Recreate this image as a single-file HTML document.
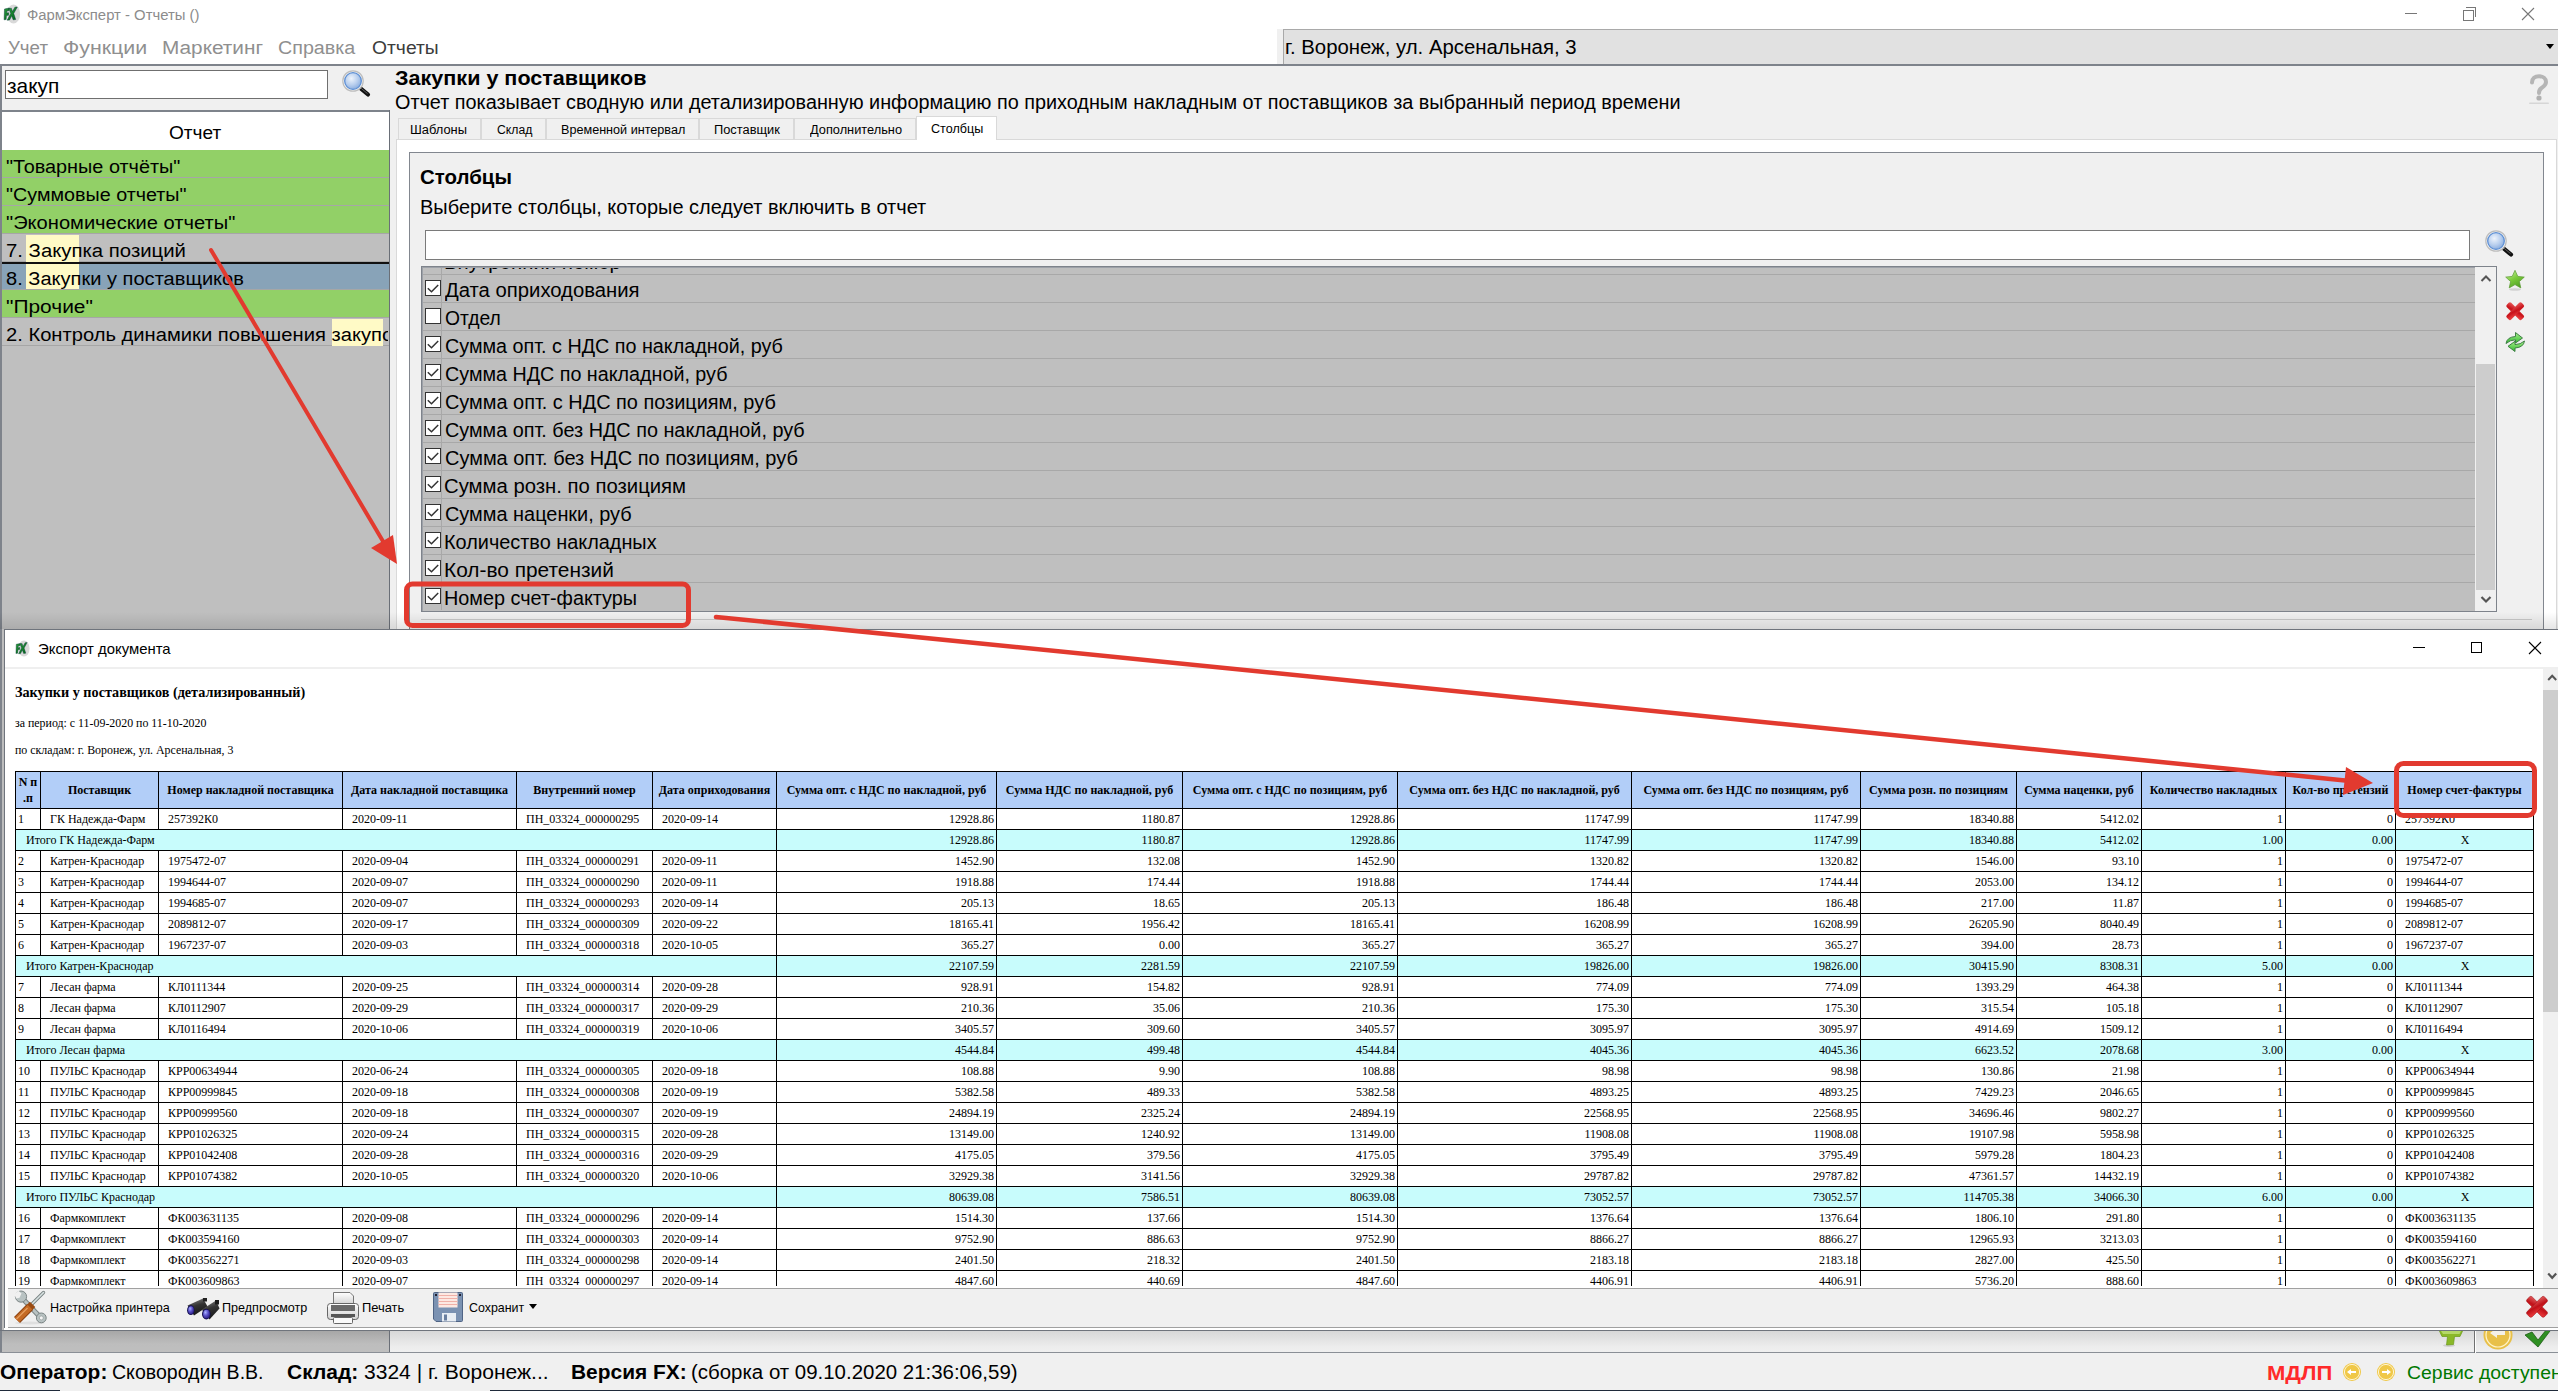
<!DOCTYPE html>
<html><head><meta charset="utf-8"><title>ФармЭксперт</title>
<style>html,body{margin:0;padding:0;width:2558px;height:1391px;overflow:hidden;position:relative;}</style>
</head><body>
<div style="position:absolute;left:0px;top:0px;width:2558px;height:1391px;background:#f0f0f0"></div><div style="position:absolute;left:0px;top:0px;width:2558px;height:29px;background:#fff"></div><div style="position:absolute;left:0px;top:29px;width:1277px;height:36px;background:#fff"></div><svg style="position:absolute;left:3px;top:3px" width="20" height="22" viewBox="0 0 20 22"><defs><linearGradient id="fxg1" x1="0" y1="0" x2="1" y2="1"><stop offset="0" stop-color="#2fa040"/><stop offset="1" stop-color="#006018"/></linearGradient></defs><ellipse cx="10.5" cy="11" rx="6.6" ry="9.4" fill="#d9d9d9"/><g transform="translate(1.5,0) scale(0.8,1) translate(-1.5,0)"><path d="M1.5 6L7.5 5L7.2 7.5L4.5 8L4.3 10L6.8 9.8L6.5 12.2L4 12.5L3.6 16.5L1 16.8Z" fill="url(#fxg1)" stroke="#033" stroke-width="0.5"/><path d="M7 5.5L10 5.2L11.5 8.5L14.5 4.2L17.5 4L13 10.5L15.5 16.5L12.3 16.8L10.5 12.8L7.8 17L4.8 17.2L9.3 10.5Z" fill="url(#fxg1)" stroke="#033" stroke-width="0.5"/></g></svg><div style="position:absolute;left:26.58px;top:7.56px;font:400 14.7px/14.7px 'Liberation Sans', sans-serif;color:#8c8c8c;white-space:nowrap;transform:scaleX(1.0118);transform-origin:0 0;">ФармЭксперт - Отчеты ()</div><div style="position:absolute;left:2405px;top:13px;width:12px;height:1px;background:#777"></div><div style="position:absolute;left:2463px;top:10px;width:9px;height:9px;border:1px solid #777"></div><div style="position:absolute;left:2466px;top:7px;width:9px;height:9px;border-top:1px solid #777;border-right:1px solid #777"></div><svg style="position:absolute;left:2521px;top:7px" width="14" height="14"><path d="M1 1L13 13M13 1L1 13" stroke="#777" stroke-width="1.1"/></svg><div style="position:absolute;left:8.04px;top:39.09px;font:400 18.8px/18.8px 'Liberation Sans', sans-serif;color:#8f8f8f;white-space:nowrap;transform:scaleX(0.9951);transform-origin:0 0;">Учет</div><div style="position:absolute;left:63.42px;top:39.09px;font:400 18.8px/18.8px 'Liberation Sans', sans-serif;color:#8f8f8f;white-space:nowrap;transform:scaleX(1.1377);transform-origin:0 0;">Функции</div><div style="position:absolute;left:162.24px;top:39.09px;font:400 18.8px/18.8px 'Liberation Sans', sans-serif;color:#8f8f8f;white-space:nowrap;transform:scaleX(1.1064);transform-origin:0 0;">Маркетинг</div><div style="position:absolute;left:278.41px;top:39.09px;font:400 18.8px/18.8px 'Liberation Sans', sans-serif;color:#8f8f8f;white-space:nowrap;transform:scaleX(1.0487);transform-origin:0 0;">Справка</div><div style="position:absolute;left:371.83px;top:39.09px;font:400 18.8px/18.8px 'Liberation Sans', sans-serif;color:#3c3c3c;white-space:nowrap;transform:scaleX(1.0273);transform-origin:0 0;">Отчеты</div><div style="position:absolute;left:1283px;top:29px;width:1275px;height:36px;background:#e1e1e1;border-top:1px solid #a9a9a9;border-left:1px solid #a9a9a9;box-sizing:border-box"></div><div style="position:absolute;left:1285.17px;top:38.15px;font:400 19.9px/19.9px 'Liberation Sans', sans-serif;color:#000;white-space:nowrap;transform:scaleX(1.0231);transform-origin:0 0;">г. Воронеж, ул. Арсенальная, 3</div><svg style="position:absolute;left:2546px;top:44px" width="9" height="6"><path d="M0 0H8L4 5Z" fill="#000"/></svg><div style="position:absolute;left:0px;top:64px;width:2558px;height:2px;background:#7e838b"></div><div style="position:absolute;left:0px;top:66px;width:2px;height:1287px;background:#7e838b"></div><div style="position:absolute;left:5px;top:70px;width:323px;height:29px;background:#fff;border:1px solid #6f6f6f;box-sizing:border-box"></div><div style="position:absolute;left:7.38px;top:76.00px;font:400 20.2px/20.2px 'Liberation Sans', sans-serif;color:#000;white-space:nowrap;transform:scaleX(1.0331);transform-origin:0 0;">закуп</div><svg style="position:absolute;left:341px;top:69px" width="32" height="32" viewBox="0 0 32 32"><defs><radialGradient id="sg" cx="40%" cy="35%" r="65%"><stop offset="0" stop-color="#eef4fc"/><stop offset="0.6" stop-color="#b9cfee"/><stop offset="1" stop-color="#8eb0e0"/></radialGradient></defs><line x1="18.5" y1="18.5" x2="27" y2="25.5" stroke="#111" stroke-width="4.2" stroke-linecap="round"/><line x1="19.5" y1="18.8" x2="26.5" y2="24.6" stroke="#666" stroke-width="0.9"/><circle cx="12" cy="12" r="10.2" fill="#f4f4f4" stroke="#bdbdbd" stroke-width="1.2"/><circle cx="12" cy="12" r="8.3" fill="url(#sg)" stroke="#5d8fd4" stroke-width="1.3"/></svg><div style="position:absolute;left:0px;top:110px;width:390px;height:2px;background:#7e838b"></div><div style="position:absolute;left:2px;top:112px;width:387px;height:38px;background:#fff"></div><div style="position:absolute;left:168.84px;top:123.77px;font:400 18.7px/18.7px 'Liberation Sans', sans-serif;color:#000;white-space:nowrap;transform:scaleX(1.0215);transform-origin:0 0;">Отчет</div><div style="position:absolute;left:2px;top:150px;width:387px;height:1203px;background:#bfbfbf"></div><div style="position:absolute;left:2px;top:150px;width:387px;height:28px;background:#92d067"></div><div style="position:absolute;left:2px;top:177px;width:387px;height:1px;background:#a6a6a6"></div><div style="position:absolute;left:2px;top:178px;width:387px;height:28px;background:#92d067"></div><div style="position:absolute;left:2px;top:205px;width:387px;height:1px;background:#a6a6a6"></div><div style="position:absolute;left:2px;top:206px;width:387px;height:28px;background:#92d067"></div><div style="position:absolute;left:2px;top:233px;width:387px;height:1px;background:#a6a6a6"></div><div style="position:absolute;left:2px;top:234px;width:387px;height:28px;background:#bfbfbf"></div><div style="position:absolute;left:2px;top:261px;width:387px;height:1px;background:#a6a6a6"></div><div style="position:absolute;left:2px;top:262px;width:387px;height:28px;background:#88a3b8"></div><div style="position:absolute;left:2px;top:289px;width:387px;height:1px;background:#a6a6a6"></div><div style="position:absolute;left:2px;top:290px;width:387px;height:28px;background:#92d067"></div><div style="position:absolute;left:2px;top:317px;width:387px;height:1px;background:#a6a6a6"></div><div style="position:absolute;left:2px;top:318px;width:387px;height:28px;background:#bfbfbf"></div><div style="position:absolute;left:2px;top:345px;width:387px;height:1px;background:#a6a6a6"></div><div style="position:absolute;left:26px;top:235px;width:53px;height:27px;background:#fffac6"></div><div style="position:absolute;left:26px;top:263px;width:53px;height:26px;background:#fffac6"></div><div style="position:absolute;left:332px;top:319px;width:51px;height:27px;background:#fffac6"></div><div style="position:absolute;left:2px;top:262px;width:387px;height:2px;background:#111"></div><div style="position:absolute;left:2px;top:150px;width:386px;height:28px;overflow:hidden"><div style="position:absolute;left:4.11px;top:6.65px;font:400 19.2px/19.2px 'Liberation Sans', sans-serif;color:#000;white-space:nowrap;transform:scaleX(1.0351);transform-origin:0 0;">&quot;Товарные отчёты&quot;</div></div><div style="position:absolute;left:2px;top:178px;width:386px;height:28px;overflow:hidden"><div style="position:absolute;left:4.11px;top:6.65px;font:400 19.2px/19.2px 'Liberation Sans', sans-serif;color:#000;white-space:nowrap;transform:scaleX(1.0285);transform-origin:0 0;">&quot;Суммовые отчеты&quot;</div></div><div style="position:absolute;left:2px;top:206px;width:386px;height:28px;overflow:hidden"><div style="position:absolute;left:4.10px;top:6.65px;font:400 19.2px/19.2px 'Liberation Sans', sans-serif;color:#000;white-space:nowrap;transform:scaleX(1.0476);transform-origin:0 0;">&quot;Экономические отчеты&quot;</div></div><div style="position:absolute;left:2px;top:234px;width:386px;height:28px;overflow:hidden"><div style="position:absolute;left:3.88px;top:6.65px;font:400 19.2px/19.2px 'Liberation Sans', sans-serif;color:#000;white-space:nowrap;transform:scaleX(1.0596);transform-origin:0 0;">7. Закупка позиций</div></div><div style="position:absolute;left:2px;top:262px;width:386px;height:28px;overflow:hidden"><div style="position:absolute;left:4.00px;top:6.65px;font:400 19.2px/19.2px 'Liberation Sans', sans-serif;color:#000;white-space:nowrap;transform:scaleX(1.0452);transform-origin:0 0;">8. Закупки у поставщиков</div></div><div style="position:absolute;left:2px;top:290px;width:386px;height:28px;overflow:hidden"><div style="position:absolute;left:4.06px;top:6.65px;font:400 19.2px/19.2px 'Liberation Sans', sans-serif;color:#000;white-space:nowrap;transform:scaleX(1.0902);transform-origin:0 0;">&quot;Прочие&quot;</div></div><div style="position:absolute;left:2px;top:318px;width:386px;height:28px;overflow:hidden"><div style="position:absolute;left:3.89px;top:6.65px;font:400 19.2px/19.2px 'Liberation Sans', sans-serif;color:#000;white-space:nowrap;transform:scaleX(1.0508);transform-origin:0 0">2. Контроль динамики повышения закупок</div></div><div style="position:absolute;left:389px;top:110px;width:1px;height:1243px;background:#6a6f77"></div><div style="position:absolute;left:395.26px;top:68.45px;font:700 20.5px/20.5px 'Liberation Sans', sans-serif;color:#000;white-space:nowrap;transform:scaleX(1.0522);transform-origin:0 0;">Закупки у поставщиков</div><div style="position:absolute;left:395.31px;top:92.99px;font:400 19.5px/19.5px 'Liberation Sans', sans-serif;color:#000;white-space:nowrap;transform:scaleX(1.0166);transform-origin:0 0;">Отчет показывает сводную или детализированную информацию по приходным накладным от поставщиков за выбранный период времени</div><svg style="position:absolute;left:2527px;top:74px" width="24" height="32" viewBox="0 0 24 32"><path d="M5 8.5C5 4.5 8 2.2 12 2.2C16 2.2 19 4.6 19 8C19 11.2 16.5 12.6 14.5 14C12.8 15.2 12 16.3 12 19" fill="none" stroke="#b5b5b5" stroke-width="4" stroke-linecap="round"/><circle cx="12" cy="24" r="2.6" fill="#b0b0b0"/><rect x="2" y="28.5" width="20" height="1.6" rx="0.8" fill="#d6d6d6"/></svg><div style="position:absolute;left:398px;top:118px;width:83px;height:22px;background:#f0f0f0;border:1px solid #d9d9d9;border-bottom:none;box-sizing:border-box"></div><div style="position:absolute;left:410.47px;top:123.92px;font:400 12.5px/12.5px 'Liberation Sans', sans-serif;color:#000;white-space:nowrap;transform:scaleX(1.0292);transform-origin:0 0;">Шаблоны</div><div style="position:absolute;left:481px;top:118px;width:65px;height:22px;background:#f0f0f0;border:1px solid #d9d9d9;border-bottom:none;box-sizing:border-box"></div><div style="position:absolute;left:496.89px;top:123.92px;font:400 12.5px/12.5px 'Liberation Sans', sans-serif;color:#000;white-space:nowrap;transform:scaleX(0.9770);transform-origin:0 0;">Склад</div><div style="position:absolute;left:546px;top:118px;width:153px;height:22px;background:#f0f0f0;border:1px solid #d9d9d9;border-bottom:none;box-sizing:border-box"></div><div style="position:absolute;left:561.29px;top:123.92px;font:400 12.5px/12.5px 'Liberation Sans', sans-serif;color:#000;white-space:nowrap;transform:scaleX(1.0095);transform-origin:0 0;">Временной интервал</div><div style="position:absolute;left:699px;top:118px;width:95px;height:22px;background:#f0f0f0;border:1px solid #d9d9d9;border-bottom:none;box-sizing:border-box"></div><div style="position:absolute;left:714.17px;top:123.92px;font:400 12.5px/12.5px 'Liberation Sans', sans-serif;color:#000;white-space:nowrap;transform:scaleX(1.0265);transform-origin:0 0;">Поставщик</div><div style="position:absolute;left:794px;top:118px;width:122px;height:22px;background:#f0f0f0;border:1px solid #d9d9d9;border-bottom:none;box-sizing:border-box"></div><div style="position:absolute;left:810.14px;top:123.92px;font:400 12.5px/12.5px 'Liberation Sans', sans-serif;color:#000;white-space:nowrap;transform:scaleX(1.0227);transform-origin:0 0;">Дополнительно</div><div style="position:absolute;left:396px;top:139px;width:2161px;height:1214px;background:#fff;border:1px solid #d9d9d9;box-sizing:border-box"></div><div style="position:absolute;left:916px;top:116px;width:81px;height:24px;background:#fff;border:1px solid #d9d9d9;border-bottom:none;box-sizing:border-box"></div><div style="position:absolute;left:931.47px;top:123.42px;font:400 12.5px/12.5px 'Liberation Sans', sans-serif;color:#000;white-space:nowrap;transform:scaleX(1.0065);transform-origin:0 0;">Столбцы</div><div style="position:absolute;left:409px;top:152px;width:2135px;height:1201px;background:#f0f0f0;border:1px solid #82878f;box-sizing:border-box"></div><div style="position:absolute;left:420.38px;top:168.49px;font:700 19.5px/19.5px 'Liberation Sans', sans-serif;color:#000;white-space:nowrap;transform:scaleX(1.0490);transform-origin:0 0;">Столбцы</div><div style="position:absolute;left:419.90px;top:198.49px;font:400 19.5px/19.5px 'Liberation Sans', sans-serif;color:#000;white-space:nowrap;transform:scaleX(1.0238);transform-origin:0 0;">Выберите столбцы, которые следует включить в отчет</div><div style="position:absolute;left:425px;top:230px;width:2045px;height:30px;background:#fff;border:1px solid #7a7a7a;box-sizing:border-box"></div><svg style="position:absolute;left:2484px;top:229px" width="32" height="32" viewBox="0 0 32 32"><defs><radialGradient id="sg2" cx="40%" cy="35%" r="65%"><stop offset="0" stop-color="#eef4fc"/><stop offset="0.6" stop-color="#b9cfee"/><stop offset="1" stop-color="#8eb0e0"/></radialGradient></defs><line x1="18.5" y1="18.5" x2="27" y2="25.5" stroke="#111" stroke-width="4.2" stroke-linecap="round"/><line x1="19.5" y1="18.8" x2="26.5" y2="24.6" stroke="#666" stroke-width="0.9"/><circle cx="12" cy="12" r="10.2" fill="#f4f4f4" stroke="#bdbdbd" stroke-width="1.2"/><circle cx="12" cy="12" r="8.3" fill="url(#sg2)" stroke="#5d8fd4" stroke-width="1.3"/></svg><div style="position:absolute;left:421px;top:266px;width:2076px;height:346px;background:#bfbfbf;border:1px solid #7e838b;box-sizing:border-box"></div><div style="position:absolute;left:422px;top:267px;width:2053px;height:1px;background:#9da1a8"></div><div style="position:absolute;left:422px;top:267px;width:1px;height:344px;background:#9da1a8"></div><div style="position:absolute;left:423px;top:268px;width:2052px;height:342px;overflow:hidden"><div style="position:absolute;left:0px;top:6px;width:2052px;height:1px;background:#a8a8a8"></div><div style="position:absolute;left:18px;top:-22px;width:1px;height:28px;background:#a8a8a8"></div><div style="position:absolute;left:2px;top:-16px;width:16px;height:16px;background:#fff;border:1px solid #333;box-sizing:border-box"></div><svg style="position:absolute;left:2px;top:-16px" width="16" height="16"><path d="M2.8 8.3L6.5 11.8L13.2 5" fill="none" stroke="#333" stroke-width="1.5"/></svg><div style="position:absolute;left:20.87px;top:-15.42px;font:400 19.4px/19.4px 'Liberation Sans', sans-serif;color:#000;white-space:nowrap;transform:scaleX(1.0490);transform-origin:0 0;">Внутренний номер</div><div style="position:absolute;left:0px;top:34px;width:2052px;height:1px;background:#a8a8a8"></div><div style="position:absolute;left:18px;top:6px;width:1px;height:28px;background:#a8a8a8"></div><div style="position:absolute;left:2px;top:12px;width:16px;height:16px;background:#fff;border:1px solid #333;box-sizing:border-box"></div><svg style="position:absolute;left:2px;top:12px" width="16" height="16"><path d="M2.8 8.3L6.5 11.8L13.2 5" fill="none" stroke="#333" stroke-width="1.5"/></svg><div style="position:absolute;left:22.40px;top:12.58px;font:400 19.4px/19.4px 'Liberation Sans', sans-serif;color:#000;white-space:nowrap;transform:scaleX(1.0455);transform-origin:0 0;">Дата оприходования</div><div style="position:absolute;left:0px;top:62px;width:2052px;height:1px;background:#a8a8a8"></div><div style="position:absolute;left:18px;top:34px;width:1px;height:28px;background:#a8a8a8"></div><div style="position:absolute;left:2px;top:40px;width:16px;height:16px;background:#fff;border:1px solid #333;box-sizing:border-box"></div><div style="position:absolute;left:21.63px;top:40.58px;font:400 19.4px/19.4px 'Liberation Sans', sans-serif;color:#000;white-space:nowrap;transform:scaleX(0.9938);transform-origin:0 0;">Отдел</div><div style="position:absolute;left:0px;top:90px;width:2052px;height:1px;background:#a8a8a8"></div><div style="position:absolute;left:18px;top:62px;width:1px;height:28px;background:#a8a8a8"></div><div style="position:absolute;left:2px;top:68px;width:16px;height:16px;background:#fff;border:1px solid #333;box-sizing:border-box"></div><svg style="position:absolute;left:2px;top:68px" width="16" height="16"><path d="M2.8 8.3L6.5 11.8L13.2 5" fill="none" stroke="#333" stroke-width="1.5"/></svg><div style="position:absolute;left:21.51px;top:68.58px;font:400 19.4px/19.4px 'Liberation Sans', sans-serif;color:#000;white-space:nowrap;transform:scaleX(1.0185);transform-origin:0 0;">Сумма опт. с НДС по накладной, руб</div><div style="position:absolute;left:0px;top:118px;width:2052px;height:1px;background:#a8a8a8"></div><div style="position:absolute;left:18px;top:90px;width:1px;height:28px;background:#a8a8a8"></div><div style="position:absolute;left:2px;top:96px;width:16px;height:16px;background:#fff;border:1px solid #333;box-sizing:border-box"></div><svg style="position:absolute;left:2px;top:96px" width="16" height="16"><path d="M2.8 8.3L6.5 11.8L13.2 5" fill="none" stroke="#333" stroke-width="1.5"/></svg><div style="position:absolute;left:21.51px;top:96.58px;font:400 19.4px/19.4px 'Liberation Sans', sans-serif;color:#000;white-space:nowrap;transform:scaleX(1.0168);transform-origin:0 0;">Сумма НДС по накладной, руб</div><div style="position:absolute;left:0px;top:146px;width:2052px;height:1px;background:#a8a8a8"></div><div style="position:absolute;left:18px;top:118px;width:1px;height:28px;background:#a8a8a8"></div><div style="position:absolute;left:2px;top:124px;width:16px;height:16px;background:#fff;border:1px solid #333;box-sizing:border-box"></div><svg style="position:absolute;left:2px;top:124px" width="16" height="16"><path d="M2.8 8.3L6.5 11.8L13.2 5" fill="none" stroke="#333" stroke-width="1.5"/></svg><div style="position:absolute;left:21.50px;top:124.58px;font:400 19.4px/19.4px 'Liberation Sans', sans-serif;color:#000;white-space:nowrap;transform:scaleX(1.0263);transform-origin:0 0;">Сумма опт. с НДС по позициям, руб</div><div style="position:absolute;left:0px;top:174px;width:2052px;height:1px;background:#a8a8a8"></div><div style="position:absolute;left:18px;top:146px;width:1px;height:28px;background:#a8a8a8"></div><div style="position:absolute;left:2px;top:152px;width:16px;height:16px;background:#fff;border:1px solid #333;box-sizing:border-box"></div><svg style="position:absolute;left:2px;top:152px" width="16" height="16"><path d="M2.8 8.3L6.5 11.8L13.2 5" fill="none" stroke="#333" stroke-width="1.5"/></svg><div style="position:absolute;left:21.51px;top:152.58px;font:400 19.4px/19.4px 'Liberation Sans', sans-serif;color:#000;white-space:nowrap;transform:scaleX(1.0215);transform-origin:0 0;">Сумма опт. без НДС по накладной, руб</div><div style="position:absolute;left:0px;top:202px;width:2052px;height:1px;background:#a8a8a8"></div><div style="position:absolute;left:18px;top:174px;width:1px;height:28px;background:#a8a8a8"></div><div style="position:absolute;left:2px;top:180px;width:16px;height:16px;background:#fff;border:1px solid #333;box-sizing:border-box"></div><svg style="position:absolute;left:2px;top:180px" width="16" height="16"><path d="M2.8 8.3L6.5 11.8L13.2 5" fill="none" stroke="#333" stroke-width="1.5"/></svg><div style="position:absolute;left:21.50px;top:180.58px;font:400 19.4px/19.4px 'Liberation Sans', sans-serif;color:#000;white-space:nowrap;transform:scaleX(1.0295);transform-origin:0 0;">Сумма опт. без НДС по позициям, руб</div><div style="position:absolute;left:0px;top:230px;width:2052px;height:1px;background:#a8a8a8"></div><div style="position:absolute;left:18px;top:202px;width:1px;height:28px;background:#a8a8a8"></div><div style="position:absolute;left:2px;top:208px;width:16px;height:16px;background:#fff;border:1px solid #333;box-sizing:border-box"></div><svg style="position:absolute;left:2px;top:208px" width="16" height="16"><path d="M2.8 8.3L6.5 11.8L13.2 5" fill="none" stroke="#333" stroke-width="1.5"/></svg><div style="position:absolute;left:21.48px;top:208.58px;font:400 19.4px/19.4px 'Liberation Sans', sans-serif;color:#000;white-space:nowrap;transform:scaleX(1.0466);transform-origin:0 0;">Сумма розн. по позициям</div><div style="position:absolute;left:0px;top:258px;width:2052px;height:1px;background:#a8a8a8"></div><div style="position:absolute;left:18px;top:230px;width:1px;height:28px;background:#a8a8a8"></div><div style="position:absolute;left:2px;top:236px;width:16px;height:16px;background:#fff;border:1px solid #333;box-sizing:border-box"></div><svg style="position:absolute;left:2px;top:236px" width="16" height="16"><path d="M2.8 8.3L6.5 11.8L13.2 5" fill="none" stroke="#333" stroke-width="1.5"/></svg><div style="position:absolute;left:21.50px;top:236.58px;font:400 19.4px/19.4px 'Liberation Sans', sans-serif;color:#000;white-space:nowrap;transform:scaleX(1.0265);transform-origin:0 0;">Сумма наценки, руб</div><div style="position:absolute;left:0px;top:286px;width:2052px;height:1px;background:#a8a8a8"></div><div style="position:absolute;left:18px;top:258px;width:1px;height:28px;background:#a8a8a8"></div><div style="position:absolute;left:2px;top:264px;width:16px;height:16px;background:#fff;border:1px solid #333;box-sizing:border-box"></div><svg style="position:absolute;left:2px;top:264px" width="16" height="16"><path d="M2.8 8.3L6.5 11.8L13.2 5" fill="none" stroke="#333" stroke-width="1.5"/></svg><div style="position:absolute;left:20.91px;top:264.58px;font:400 19.4px/19.4px 'Liberation Sans', sans-serif;color:#000;white-space:nowrap;transform:scaleX(1.0246);transform-origin:0 0;">Количество накладных</div><div style="position:absolute;left:0px;top:314px;width:2052px;height:1px;background:#a8a8a8"></div><div style="position:absolute;left:18px;top:286px;width:1px;height:28px;background:#a8a8a8"></div><div style="position:absolute;left:2px;top:292px;width:16px;height:16px;background:#fff;border:1px solid #333;box-sizing:border-box"></div><svg style="position:absolute;left:2px;top:292px" width="16" height="16"><path d="M2.8 8.3L6.5 11.8L13.2 5" fill="none" stroke="#333" stroke-width="1.5"/></svg><div style="position:absolute;left:20.83px;top:292.58px;font:400 19.4px/19.4px 'Liberation Sans', sans-serif;color:#000;white-space:nowrap;transform:scaleX(1.0761);transform-origin:0 0;">Кол-во претензий</div><div style="position:absolute;left:0px;top:342px;width:2052px;height:1px;background:#a8a8a8"></div><div style="position:absolute;left:18px;top:314px;width:1px;height:28px;background:#a8a8a8"></div><div style="position:absolute;left:2px;top:320px;width:16px;height:16px;background:#fff;border:1px solid #333;box-sizing:border-box"></div><svg style="position:absolute;left:2px;top:320px" width="16" height="16"><path d="M2.8 8.3L6.5 11.8L13.2 5" fill="none" stroke="#333" stroke-width="1.5"/></svg><div style="position:absolute;left:20.91px;top:320.58px;font:400 19.4px/19.4px 'Liberation Sans', sans-serif;color:#000;white-space:nowrap;transform:scaleX(1.0223);transform-origin:0 0;">Номер счет-фактуры</div></div><div style="position:absolute;left:2475px;top:267px;width:21px;height:344px;background:#f0f0f0"></div><div style="position:absolute;left:2476px;top:364px;width:19px;height:226px;background:#cdcdcd"></div><svg style="position:absolute;left:2480px;top:273px" width="12" height="10"><path d="M1.5 8L6 3.5L10.5 8" fill="none" stroke="#555" stroke-width="2"/></svg><svg style="position:absolute;left:2480px;top:595px" width="12" height="10"><path d="M1.5 2L6 6.5L10.5 2" fill="none" stroke="#555" stroke-width="2.2"/></svg><div style="position:absolute;left:421px;top:619px;width:2111px;height:1px;background:#c8c8c8"></div><svg style="position:absolute;left:2503px;top:268px" width="24" height="24" viewBox="0 0 24 24"><defs><linearGradient id="stg" x1="0.2" y1="0" x2="0.8" y2="1"><stop offset="0" stop-color="#c8f0a0"/><stop offset="0.45" stop-color="#7ccc3c"/><stop offset="1" stop-color="#4a9a20"/></linearGradient></defs><ellipse cx="12" cy="21.5" rx="6" ry="1.3" fill="rgba(0,0,0,0.12)"/><path d="M12 2.3L14.8 8.4L21.3 9.1L16.4 13.5L17.8 19.9L12 16.6L6.2 19.9L7.6 13.5L2.7 9.1L9.2 8.4Z" fill="url(#stg)" stroke="#5a9a30" stroke-width="0.7" stroke-linejoin="round"/></svg><svg style="position:absolute;left:2504px;top:300px" width="22" height="22" viewBox="0 0 22 22"><defs><linearGradient id="xg" x1="0" y1="0" x2="1" y2="1"><stop offset="0" stop-color="#e85a5a"/><stop offset="0.5" stop-color="#c8121a"/><stop offset="1" stop-color="#f04848"/></linearGradient></defs><g transform="translate(11.2,11.2) rotate(45)" fill="url(#xg)"><rect x="-10.5" y="-3.1" width="21" height="6.2" rx="1.8"/><rect x="-3.1" y="-10.5" width="6.2" height="21" rx="1.8"/></g></svg><svg style="position:absolute;left:2504px;top:330px" width="22" height="24" viewBox="0 0 22 24"><defs><linearGradient id="rfg" x1="0" y1="0" x2="0" y2="1"><stop offset="0" stop-color="#a8f08a"/><stop offset="1" stop-color="#30b830"/></linearGradient></defs><path d="M2 13.5Q3 7 11.5 6.5L11.5 2.5L18.5 8L11.5 13L11.5 9.8Q6 10 2 13.5Z" fill="url(#rfg)" stroke="#3f7f45" stroke-width="1" stroke-linejoin="round"/><path d="M20.5 11Q19.5 17.5 11 18L11 21.5L4 16.3L11 11.3L11 14.6Q16.5 14.5 20.5 11Z" fill="url(#rfg)" stroke="#3f7f45" stroke-width="1" stroke-linejoin="round"/></svg><div style="position:absolute;left:0px;top:612px;width:2558px;height:17px;background:linear-gradient(180deg,rgba(0,0,0,0),rgba(0,0,0,0.10))"></div><div style="position:absolute;left:2px;top:629px;width:2px;height:701px;background:#bdbdbd"></div><div style="position:absolute;left:4px;top:629px;width:2554px;height:701px;background:#fff;border-top:1px solid #6f747c;border-left:1px solid #6f747c;box-sizing:border-box"></div><svg style="position:absolute;left:15px;top:638.5px" width="17" height="19" viewBox="0 0 20 22"><defs><linearGradient id="fxg2" x1="0" y1="0" x2="1" y2="1"><stop offset="0" stop-color="#2fa040"/><stop offset="1" stop-color="#006018"/></linearGradient></defs><ellipse cx="10.5" cy="11" rx="6.6" ry="9.4" fill="#d9d9d9"/><g transform="translate(1.5,0) scale(0.8,1) translate(-1.5,0)"><path d="M1.5 6L7.5 5L7.2 7.5L4.5 8L4.3 10L6.8 9.8L6.5 12.2L4 12.5L3.6 16.5L1 16.8Z" fill="url(#fxg2)" stroke="#033" stroke-width="0.5"/><path d="M7 5.5L10 5.2L11.5 8.5L14.5 4.2L17.5 4L13 10.5L15.5 16.5L12.3 16.8L10.5 12.8L7.8 17L4.8 17.2L9.3 10.5Z" fill="url(#fxg2)" stroke="#033" stroke-width="0.5"/></g></svg><div style="position:absolute;left:38.38px;top:641.73px;font:400 14.5px/14.5px 'Liberation Sans', sans-serif;color:#000;white-space:nowrap;transform:scaleX(1.0265);transform-origin:0 0;">Экспорт документа</div><div style="position:absolute;left:2413px;top:647px;width:12px;height:1px;background:#000"></div><div style="position:absolute;left:2471px;top:642px;width:11px;height:11px;border:1px solid #000;box-sizing:border-box"></div><svg style="position:absolute;left:2528px;top:641px" width="14" height="14"><path d="M1 1L13 13M13 1L1 13" stroke="#000" stroke-width="1.1"/></svg><div style="position:absolute;left:5px;top:667px;width:2553px;height:2px;background:#efefef"></div><div style="position:absolute;left:15px;top:684.71px;font:700 14.2px/14.2px 'Liberation Serif', serif;color:#000;white-space:nowrap;">Закупки у поставщиков (детализированный)</div><div style="position:absolute;left:15px;top:718.03px;font:400 11.9px/11.9px 'Liberation Serif', serif;color:#000;white-space:nowrap;">за период: с 11-09-2020 по 11-10-2020</div><div style="position:absolute;left:15px;top:745.03px;font:400 11.9px/11.9px 'Liberation Serif', serif;color:#000;white-space:nowrap;">по складам: г. Воронеж, ул. Арсенальная, 3</div><div style="position:absolute;left:2543px;top:669px;width:15px;height:619px;background:#f0f0f0"></div><div style="position:absolute;left:2543px;top:690px;width:15px;height:322px;background:#cdcdcd"></div><svg style="position:absolute;left:2547px;top:673px" width="11" height="9"><path d="M1.2 7L5.2 2.8L9.2 7" fill="none" stroke="#555" stroke-width="2"/></svg><svg style="position:absolute;left:2547px;top:1272px" width="11" height="9"><path d="M1.2 1.5L5.2 5.8L9.2 1.5" fill="none" stroke="#555" stroke-width="2.2"/></svg><div style="position:absolute;left:0;top:0;width:2543px;height:1286px;overflow:hidden"><div style="position:absolute;left:15px;top:771px;width:2519px;height:37px;background:#b2cef8"></div><div style="position:absolute;left:-900.5px;width:2000px;text-align:center;top:783.95px;font:700 12px/12px 'Liberation Serif', serif;color:#000;white-space:nowrap;">Поставщик</div><div style="position:absolute;left:-749.5px;width:2000px;text-align:center;top:783.95px;font:700 12px/12px 'Liberation Serif', serif;color:#000;white-space:nowrap;">Номер накладной поставщика</div><div style="position:absolute;left:-570.5px;width:2000px;text-align:center;top:783.95px;font:700 12px/12px 'Liberation Serif', serif;color:#000;white-space:nowrap;">Дата накладной поставщика</div><div style="position:absolute;left:-415.5px;width:2000px;text-align:center;top:783.95px;font:700 12px/12px 'Liberation Serif', serif;color:#000;white-space:nowrap;">Внутренний номер</div><div style="position:absolute;left:-285.5px;width:2000px;text-align:center;top:783.95px;font:700 12px/12px 'Liberation Serif', serif;color:#000;white-space:nowrap;">Дата оприходования</div><div style="position:absolute;left:-113.5px;width:2000px;text-align:center;top:783.95px;font:700 12px/12px 'Liberation Serif', serif;color:#000;white-space:nowrap;">Сумма опт. с НДС по накладной, руб</div><div style="position:absolute;left:89.5px;width:2000px;text-align:center;top:783.95px;font:700 12px/12px 'Liberation Serif', serif;color:#000;white-space:nowrap;">Сумма НДС по накладной, руб</div><div style="position:absolute;left:290.0px;width:2000px;text-align:center;top:783.95px;font:700 12px/12px 'Liberation Serif', serif;color:#000;white-space:nowrap;">Сумма опт. с НДС по позициям, руб</div><div style="position:absolute;left:514.5px;width:2000px;text-align:center;top:783.95px;font:700 12px/12px 'Liberation Serif', serif;color:#000;white-space:nowrap;">Сумма опт. без НДС по накладной, руб</div><div style="position:absolute;left:746.0px;width:2000px;text-align:center;top:783.95px;font:700 12px/12px 'Liberation Serif', serif;color:#000;white-space:nowrap;">Сумма опт. без НДС по позициям, руб</div><div style="position:absolute;left:938.5px;width:2000px;text-align:center;top:783.95px;font:700 12px/12px 'Liberation Serif', serif;color:#000;white-space:nowrap;">Сумма розн. по позициям</div><div style="position:absolute;left:1079.0px;width:2000px;text-align:center;top:783.95px;font:700 12px/12px 'Liberation Serif', serif;color:#000;white-space:nowrap;">Сумма наценки, руб</div><div style="position:absolute;left:1213.5px;width:2000px;text-align:center;top:783.95px;font:700 12px/12px 'Liberation Serif', serif;color:#000;white-space:nowrap;">Количество накладных</div><div style="position:absolute;left:1340.5px;width:2000px;text-align:center;top:783.95px;font:700 12px/12px 'Liberation Serif', serif;color:#000;white-space:nowrap;">Кол-во претензий</div><div style="position:absolute;left:1464.5px;width:2000px;text-align:center;top:783.95px;font:700 12px/12px 'Liberation Serif', serif;color:#000;white-space:nowrap;">Номер счет-фактуры</div><div style="position:absolute;left:-972px;width:2000px;text-align:center;top:775.95px;font:700 12px/12px 'Liberation Serif', serif;color:#000;white-space:nowrap;">N п</div><div style="position:absolute;left:-972px;width:2000px;text-align:center;top:791.95px;font:700 12px/12px 'Liberation Serif', serif;color:#000;white-space:nowrap;">.п</div><div style="position:absolute;left:18px;top:812.95px;font:400 12px/12px 'Liberation Serif', serif;color:#000;white-space:nowrap;">1</div><div style="position:absolute;left:50px;top:812.95px;font:400 12px/12px 'Liberation Serif', serif;color:#000;white-space:nowrap;">ГК Надежда-Фарм</div><div style="position:absolute;left:168px;top:812.95px;font:400 12px/12px 'Liberation Serif', serif;color:#000;white-space:nowrap;">257392К0</div><div style="position:absolute;left:352px;top:812.95px;font:400 12px/12px 'Liberation Serif', serif;color:#000;white-space:nowrap;">2020-09-11</div><div style="position:absolute;left:526px;top:812.95px;font:400 12px/12px 'Liberation Serif', serif;color:#000;white-space:nowrap;">ПН_03324_000000295</div><div style="position:absolute;left:662px;top:812.95px;font:400 12px/12px 'Liberation Serif', serif;color:#000;white-space:nowrap;">2020-09-14</div><div style="position:absolute;left:-1006px;width:2000px;text-align:right;top:812.95px;font:400 12px/12px 'Liberation Serif', serif;color:#000;white-space:nowrap;">12928.86</div><div style="position:absolute;left:-820px;width:2000px;text-align:right;top:812.95px;font:400 12px/12px 'Liberation Serif', serif;color:#000;white-space:nowrap;">1180.87</div><div style="position:absolute;left:-605px;width:2000px;text-align:right;top:812.95px;font:400 12px/12px 'Liberation Serif', serif;color:#000;white-space:nowrap;">12928.86</div><div style="position:absolute;left:-371px;width:2000px;text-align:right;top:812.95px;font:400 12px/12px 'Liberation Serif', serif;color:#000;white-space:nowrap;">11747.99</div><div style="position:absolute;left:-142px;width:2000px;text-align:right;top:812.95px;font:400 12px/12px 'Liberation Serif', serif;color:#000;white-space:nowrap;">11747.99</div><div style="position:absolute;left:14px;width:2000px;text-align:right;top:812.95px;font:400 12px/12px 'Liberation Serif', serif;color:#000;white-space:nowrap;">18340.88</div><div style="position:absolute;left:139px;width:2000px;text-align:right;top:812.95px;font:400 12px/12px 'Liberation Serif', serif;color:#000;white-space:nowrap;">5412.02</div><div style="position:absolute;left:283px;width:2000px;text-align:right;top:812.95px;font:400 12px/12px 'Liberation Serif', serif;color:#000;white-space:nowrap;">1</div><div style="position:absolute;left:393px;width:2000px;text-align:right;top:812.95px;font:400 12px/12px 'Liberation Serif', serif;color:#000;white-space:nowrap;">0</div><div style="position:absolute;left:2405px;top:812.95px;font:400 12px/12px 'Liberation Serif', serif;color:#000;white-space:nowrap;">257392К0</div><div style="position:absolute;left:15px;top:829px;width:2519px;height:21px;background:#c8fcfc"></div><div style="position:absolute;left:26px;top:833.95px;font:400 12px/12px 'Liberation Serif', serif;color:#000;white-space:nowrap;">Итого ГК Надежда-Фарм</div><div style="position:absolute;left:-1006px;width:2000px;text-align:right;top:833.95px;font:400 12px/12px 'Liberation Serif', serif;color:#000;white-space:nowrap;">12928.86</div><div style="position:absolute;left:-820px;width:2000px;text-align:right;top:833.95px;font:400 12px/12px 'Liberation Serif', serif;color:#000;white-space:nowrap;">1180.87</div><div style="position:absolute;left:-605px;width:2000px;text-align:right;top:833.95px;font:400 12px/12px 'Liberation Serif', serif;color:#000;white-space:nowrap;">12928.86</div><div style="position:absolute;left:-371px;width:2000px;text-align:right;top:833.95px;font:400 12px/12px 'Liberation Serif', serif;color:#000;white-space:nowrap;">11747.99</div><div style="position:absolute;left:-142px;width:2000px;text-align:right;top:833.95px;font:400 12px/12px 'Liberation Serif', serif;color:#000;white-space:nowrap;">11747.99</div><div style="position:absolute;left:14px;width:2000px;text-align:right;top:833.95px;font:400 12px/12px 'Liberation Serif', serif;color:#000;white-space:nowrap;">18340.88</div><div style="position:absolute;left:139px;width:2000px;text-align:right;top:833.95px;font:400 12px/12px 'Liberation Serif', serif;color:#000;white-space:nowrap;">5412.02</div><div style="position:absolute;left:283px;width:2000px;text-align:right;top:833.95px;font:400 12px/12px 'Liberation Serif', serif;color:#000;white-space:nowrap;">1.00</div><div style="position:absolute;left:393px;width:2000px;text-align:right;top:833.95px;font:400 12px/12px 'Liberation Serif', serif;color:#000;white-space:nowrap;">0.00</div><div style="position:absolute;left:1465.0px;width:2000px;text-align:center;top:833.95px;font:400 12px/12px 'Liberation Serif', serif;color:#000;white-space:nowrap;">X</div><div style="position:absolute;left:18px;top:854.95px;font:400 12px/12px 'Liberation Serif', serif;color:#000;white-space:nowrap;">2</div><div style="position:absolute;left:50px;top:854.95px;font:400 12px/12px 'Liberation Serif', serif;color:#000;white-space:nowrap;">Катрен-Краснодар</div><div style="position:absolute;left:168px;top:854.95px;font:400 12px/12px 'Liberation Serif', serif;color:#000;white-space:nowrap;">1975472-07</div><div style="position:absolute;left:352px;top:854.95px;font:400 12px/12px 'Liberation Serif', serif;color:#000;white-space:nowrap;">2020-09-04</div><div style="position:absolute;left:526px;top:854.95px;font:400 12px/12px 'Liberation Serif', serif;color:#000;white-space:nowrap;">ПН_03324_000000291</div><div style="position:absolute;left:662px;top:854.95px;font:400 12px/12px 'Liberation Serif', serif;color:#000;white-space:nowrap;">2020-09-11</div><div style="position:absolute;left:-1006px;width:2000px;text-align:right;top:854.95px;font:400 12px/12px 'Liberation Serif', serif;color:#000;white-space:nowrap;">1452.90</div><div style="position:absolute;left:-820px;width:2000px;text-align:right;top:854.95px;font:400 12px/12px 'Liberation Serif', serif;color:#000;white-space:nowrap;">132.08</div><div style="position:absolute;left:-605px;width:2000px;text-align:right;top:854.95px;font:400 12px/12px 'Liberation Serif', serif;color:#000;white-space:nowrap;">1452.90</div><div style="position:absolute;left:-371px;width:2000px;text-align:right;top:854.95px;font:400 12px/12px 'Liberation Serif', serif;color:#000;white-space:nowrap;">1320.82</div><div style="position:absolute;left:-142px;width:2000px;text-align:right;top:854.95px;font:400 12px/12px 'Liberation Serif', serif;color:#000;white-space:nowrap;">1320.82</div><div style="position:absolute;left:14px;width:2000px;text-align:right;top:854.95px;font:400 12px/12px 'Liberation Serif', serif;color:#000;white-space:nowrap;">1546.00</div><div style="position:absolute;left:139px;width:2000px;text-align:right;top:854.95px;font:400 12px/12px 'Liberation Serif', serif;color:#000;white-space:nowrap;">93.10</div><div style="position:absolute;left:283px;width:2000px;text-align:right;top:854.95px;font:400 12px/12px 'Liberation Serif', serif;color:#000;white-space:nowrap;">1</div><div style="position:absolute;left:393px;width:2000px;text-align:right;top:854.95px;font:400 12px/12px 'Liberation Serif', serif;color:#000;white-space:nowrap;">0</div><div style="position:absolute;left:2405px;top:854.95px;font:400 12px/12px 'Liberation Serif', serif;color:#000;white-space:nowrap;">1975472-07</div><div style="position:absolute;left:18px;top:875.95px;font:400 12px/12px 'Liberation Serif', serif;color:#000;white-space:nowrap;">3</div><div style="position:absolute;left:50px;top:875.95px;font:400 12px/12px 'Liberation Serif', serif;color:#000;white-space:nowrap;">Катрен-Краснодар</div><div style="position:absolute;left:168px;top:875.95px;font:400 12px/12px 'Liberation Serif', serif;color:#000;white-space:nowrap;">1994644-07</div><div style="position:absolute;left:352px;top:875.95px;font:400 12px/12px 'Liberation Serif', serif;color:#000;white-space:nowrap;">2020-09-07</div><div style="position:absolute;left:526px;top:875.95px;font:400 12px/12px 'Liberation Serif', serif;color:#000;white-space:nowrap;">ПН_03324_000000290</div><div style="position:absolute;left:662px;top:875.95px;font:400 12px/12px 'Liberation Serif', serif;color:#000;white-space:nowrap;">2020-09-11</div><div style="position:absolute;left:-1006px;width:2000px;text-align:right;top:875.95px;font:400 12px/12px 'Liberation Serif', serif;color:#000;white-space:nowrap;">1918.88</div><div style="position:absolute;left:-820px;width:2000px;text-align:right;top:875.95px;font:400 12px/12px 'Liberation Serif', serif;color:#000;white-space:nowrap;">174.44</div><div style="position:absolute;left:-605px;width:2000px;text-align:right;top:875.95px;font:400 12px/12px 'Liberation Serif', serif;color:#000;white-space:nowrap;">1918.88</div><div style="position:absolute;left:-371px;width:2000px;text-align:right;top:875.95px;font:400 12px/12px 'Liberation Serif', serif;color:#000;white-space:nowrap;">1744.44</div><div style="position:absolute;left:-142px;width:2000px;text-align:right;top:875.95px;font:400 12px/12px 'Liberation Serif', serif;color:#000;white-space:nowrap;">1744.44</div><div style="position:absolute;left:14px;width:2000px;text-align:right;top:875.95px;font:400 12px/12px 'Liberation Serif', serif;color:#000;white-space:nowrap;">2053.00</div><div style="position:absolute;left:139px;width:2000px;text-align:right;top:875.95px;font:400 12px/12px 'Liberation Serif', serif;color:#000;white-space:nowrap;">134.12</div><div style="position:absolute;left:283px;width:2000px;text-align:right;top:875.95px;font:400 12px/12px 'Liberation Serif', serif;color:#000;white-space:nowrap;">1</div><div style="position:absolute;left:393px;width:2000px;text-align:right;top:875.95px;font:400 12px/12px 'Liberation Serif', serif;color:#000;white-space:nowrap;">0</div><div style="position:absolute;left:2405px;top:875.95px;font:400 12px/12px 'Liberation Serif', serif;color:#000;white-space:nowrap;">1994644-07</div><div style="position:absolute;left:18px;top:896.95px;font:400 12px/12px 'Liberation Serif', serif;color:#000;white-space:nowrap;">4</div><div style="position:absolute;left:50px;top:896.95px;font:400 12px/12px 'Liberation Serif', serif;color:#000;white-space:nowrap;">Катрен-Краснодар</div><div style="position:absolute;left:168px;top:896.95px;font:400 12px/12px 'Liberation Serif', serif;color:#000;white-space:nowrap;">1994685-07</div><div style="position:absolute;left:352px;top:896.95px;font:400 12px/12px 'Liberation Serif', serif;color:#000;white-space:nowrap;">2020-09-07</div><div style="position:absolute;left:526px;top:896.95px;font:400 12px/12px 'Liberation Serif', serif;color:#000;white-space:nowrap;">ПН_03324_000000293</div><div style="position:absolute;left:662px;top:896.95px;font:400 12px/12px 'Liberation Serif', serif;color:#000;white-space:nowrap;">2020-09-14</div><div style="position:absolute;left:-1006px;width:2000px;text-align:right;top:896.95px;font:400 12px/12px 'Liberation Serif', serif;color:#000;white-space:nowrap;">205.13</div><div style="position:absolute;left:-820px;width:2000px;text-align:right;top:896.95px;font:400 12px/12px 'Liberation Serif', serif;color:#000;white-space:nowrap;">18.65</div><div style="position:absolute;left:-605px;width:2000px;text-align:right;top:896.95px;font:400 12px/12px 'Liberation Serif', serif;color:#000;white-space:nowrap;">205.13</div><div style="position:absolute;left:-371px;width:2000px;text-align:right;top:896.95px;font:400 12px/12px 'Liberation Serif', serif;color:#000;white-space:nowrap;">186.48</div><div style="position:absolute;left:-142px;width:2000px;text-align:right;top:896.95px;font:400 12px/12px 'Liberation Serif', serif;color:#000;white-space:nowrap;">186.48</div><div style="position:absolute;left:14px;width:2000px;text-align:right;top:896.95px;font:400 12px/12px 'Liberation Serif', serif;color:#000;white-space:nowrap;">217.00</div><div style="position:absolute;left:139px;width:2000px;text-align:right;top:896.95px;font:400 12px/12px 'Liberation Serif', serif;color:#000;white-space:nowrap;">11.87</div><div style="position:absolute;left:283px;width:2000px;text-align:right;top:896.95px;font:400 12px/12px 'Liberation Serif', serif;color:#000;white-space:nowrap;">1</div><div style="position:absolute;left:393px;width:2000px;text-align:right;top:896.95px;font:400 12px/12px 'Liberation Serif', serif;color:#000;white-space:nowrap;">0</div><div style="position:absolute;left:2405px;top:896.95px;font:400 12px/12px 'Liberation Serif', serif;color:#000;white-space:nowrap;">1994685-07</div><div style="position:absolute;left:18px;top:917.95px;font:400 12px/12px 'Liberation Serif', serif;color:#000;white-space:nowrap;">5</div><div style="position:absolute;left:50px;top:917.95px;font:400 12px/12px 'Liberation Serif', serif;color:#000;white-space:nowrap;">Катрен-Краснодар</div><div style="position:absolute;left:168px;top:917.95px;font:400 12px/12px 'Liberation Serif', serif;color:#000;white-space:nowrap;">2089812-07</div><div style="position:absolute;left:352px;top:917.95px;font:400 12px/12px 'Liberation Serif', serif;color:#000;white-space:nowrap;">2020-09-17</div><div style="position:absolute;left:526px;top:917.95px;font:400 12px/12px 'Liberation Serif', serif;color:#000;white-space:nowrap;">ПН_03324_000000309</div><div style="position:absolute;left:662px;top:917.95px;font:400 12px/12px 'Liberation Serif', serif;color:#000;white-space:nowrap;">2020-09-22</div><div style="position:absolute;left:-1006px;width:2000px;text-align:right;top:917.95px;font:400 12px/12px 'Liberation Serif', serif;color:#000;white-space:nowrap;">18165.41</div><div style="position:absolute;left:-820px;width:2000px;text-align:right;top:917.95px;font:400 12px/12px 'Liberation Serif', serif;color:#000;white-space:nowrap;">1956.42</div><div style="position:absolute;left:-605px;width:2000px;text-align:right;top:917.95px;font:400 12px/12px 'Liberation Serif', serif;color:#000;white-space:nowrap;">18165.41</div><div style="position:absolute;left:-371px;width:2000px;text-align:right;top:917.95px;font:400 12px/12px 'Liberation Serif', serif;color:#000;white-space:nowrap;">16208.99</div><div style="position:absolute;left:-142px;width:2000px;text-align:right;top:917.95px;font:400 12px/12px 'Liberation Serif', serif;color:#000;white-space:nowrap;">16208.99</div><div style="position:absolute;left:14px;width:2000px;text-align:right;top:917.95px;font:400 12px/12px 'Liberation Serif', serif;color:#000;white-space:nowrap;">26205.90</div><div style="position:absolute;left:139px;width:2000px;text-align:right;top:917.95px;font:400 12px/12px 'Liberation Serif', serif;color:#000;white-space:nowrap;">8040.49</div><div style="position:absolute;left:283px;width:2000px;text-align:right;top:917.95px;font:400 12px/12px 'Liberation Serif', serif;color:#000;white-space:nowrap;">1</div><div style="position:absolute;left:393px;width:2000px;text-align:right;top:917.95px;font:400 12px/12px 'Liberation Serif', serif;color:#000;white-space:nowrap;">0</div><div style="position:absolute;left:2405px;top:917.95px;font:400 12px/12px 'Liberation Serif', serif;color:#000;white-space:nowrap;">2089812-07</div><div style="position:absolute;left:18px;top:938.95px;font:400 12px/12px 'Liberation Serif', serif;color:#000;white-space:nowrap;">6</div><div style="position:absolute;left:50px;top:938.95px;font:400 12px/12px 'Liberation Serif', serif;color:#000;white-space:nowrap;">Катрен-Краснодар</div><div style="position:absolute;left:168px;top:938.95px;font:400 12px/12px 'Liberation Serif', serif;color:#000;white-space:nowrap;">1967237-07</div><div style="position:absolute;left:352px;top:938.95px;font:400 12px/12px 'Liberation Serif', serif;color:#000;white-space:nowrap;">2020-09-03</div><div style="position:absolute;left:526px;top:938.95px;font:400 12px/12px 'Liberation Serif', serif;color:#000;white-space:nowrap;">ПН_03324_000000318</div><div style="position:absolute;left:662px;top:938.95px;font:400 12px/12px 'Liberation Serif', serif;color:#000;white-space:nowrap;">2020-10-05</div><div style="position:absolute;left:-1006px;width:2000px;text-align:right;top:938.95px;font:400 12px/12px 'Liberation Serif', serif;color:#000;white-space:nowrap;">365.27</div><div style="position:absolute;left:-820px;width:2000px;text-align:right;top:938.95px;font:400 12px/12px 'Liberation Serif', serif;color:#000;white-space:nowrap;">0.00</div><div style="position:absolute;left:-605px;width:2000px;text-align:right;top:938.95px;font:400 12px/12px 'Liberation Serif', serif;color:#000;white-space:nowrap;">365.27</div><div style="position:absolute;left:-371px;width:2000px;text-align:right;top:938.95px;font:400 12px/12px 'Liberation Serif', serif;color:#000;white-space:nowrap;">365.27</div><div style="position:absolute;left:-142px;width:2000px;text-align:right;top:938.95px;font:400 12px/12px 'Liberation Serif', serif;color:#000;white-space:nowrap;">365.27</div><div style="position:absolute;left:14px;width:2000px;text-align:right;top:938.95px;font:400 12px/12px 'Liberation Serif', serif;color:#000;white-space:nowrap;">394.00</div><div style="position:absolute;left:139px;width:2000px;text-align:right;top:938.95px;font:400 12px/12px 'Liberation Serif', serif;color:#000;white-space:nowrap;">28.73</div><div style="position:absolute;left:283px;width:2000px;text-align:right;top:938.95px;font:400 12px/12px 'Liberation Serif', serif;color:#000;white-space:nowrap;">1</div><div style="position:absolute;left:393px;width:2000px;text-align:right;top:938.95px;font:400 12px/12px 'Liberation Serif', serif;color:#000;white-space:nowrap;">0</div><div style="position:absolute;left:2405px;top:938.95px;font:400 12px/12px 'Liberation Serif', serif;color:#000;white-space:nowrap;">1967237-07</div><div style="position:absolute;left:15px;top:955px;width:2519px;height:21px;background:#c8fcfc"></div><div style="position:absolute;left:26px;top:959.95px;font:400 12px/12px 'Liberation Serif', serif;color:#000;white-space:nowrap;">Итого Катрен-Краснодар</div><div style="position:absolute;left:-1006px;width:2000px;text-align:right;top:959.95px;font:400 12px/12px 'Liberation Serif', serif;color:#000;white-space:nowrap;">22107.59</div><div style="position:absolute;left:-820px;width:2000px;text-align:right;top:959.95px;font:400 12px/12px 'Liberation Serif', serif;color:#000;white-space:nowrap;">2281.59</div><div style="position:absolute;left:-605px;width:2000px;text-align:right;top:959.95px;font:400 12px/12px 'Liberation Serif', serif;color:#000;white-space:nowrap;">22107.59</div><div style="position:absolute;left:-371px;width:2000px;text-align:right;top:959.95px;font:400 12px/12px 'Liberation Serif', serif;color:#000;white-space:nowrap;">19826.00</div><div style="position:absolute;left:-142px;width:2000px;text-align:right;top:959.95px;font:400 12px/12px 'Liberation Serif', serif;color:#000;white-space:nowrap;">19826.00</div><div style="position:absolute;left:14px;width:2000px;text-align:right;top:959.95px;font:400 12px/12px 'Liberation Serif', serif;color:#000;white-space:nowrap;">30415.90</div><div style="position:absolute;left:139px;width:2000px;text-align:right;top:959.95px;font:400 12px/12px 'Liberation Serif', serif;color:#000;white-space:nowrap;">8308.31</div><div style="position:absolute;left:283px;width:2000px;text-align:right;top:959.95px;font:400 12px/12px 'Liberation Serif', serif;color:#000;white-space:nowrap;">5.00</div><div style="position:absolute;left:393px;width:2000px;text-align:right;top:959.95px;font:400 12px/12px 'Liberation Serif', serif;color:#000;white-space:nowrap;">0.00</div><div style="position:absolute;left:1465.0px;width:2000px;text-align:center;top:959.95px;font:400 12px/12px 'Liberation Serif', serif;color:#000;white-space:nowrap;">X</div><div style="position:absolute;left:18px;top:980.95px;font:400 12px/12px 'Liberation Serif', serif;color:#000;white-space:nowrap;">7</div><div style="position:absolute;left:50px;top:980.95px;font:400 12px/12px 'Liberation Serif', serif;color:#000;white-space:nowrap;">Лесан фарма</div><div style="position:absolute;left:168px;top:980.95px;font:400 12px/12px 'Liberation Serif', serif;color:#000;white-space:nowrap;">КЛ0111344</div><div style="position:absolute;left:352px;top:980.95px;font:400 12px/12px 'Liberation Serif', serif;color:#000;white-space:nowrap;">2020-09-25</div><div style="position:absolute;left:526px;top:980.95px;font:400 12px/12px 'Liberation Serif', serif;color:#000;white-space:nowrap;">ПН_03324_000000314</div><div style="position:absolute;left:662px;top:980.95px;font:400 12px/12px 'Liberation Serif', serif;color:#000;white-space:nowrap;">2020-09-28</div><div style="position:absolute;left:-1006px;width:2000px;text-align:right;top:980.95px;font:400 12px/12px 'Liberation Serif', serif;color:#000;white-space:nowrap;">928.91</div><div style="position:absolute;left:-820px;width:2000px;text-align:right;top:980.95px;font:400 12px/12px 'Liberation Serif', serif;color:#000;white-space:nowrap;">154.82</div><div style="position:absolute;left:-605px;width:2000px;text-align:right;top:980.95px;font:400 12px/12px 'Liberation Serif', serif;color:#000;white-space:nowrap;">928.91</div><div style="position:absolute;left:-371px;width:2000px;text-align:right;top:980.95px;font:400 12px/12px 'Liberation Serif', serif;color:#000;white-space:nowrap;">774.09</div><div style="position:absolute;left:-142px;width:2000px;text-align:right;top:980.95px;font:400 12px/12px 'Liberation Serif', serif;color:#000;white-space:nowrap;">774.09</div><div style="position:absolute;left:14px;width:2000px;text-align:right;top:980.95px;font:400 12px/12px 'Liberation Serif', serif;color:#000;white-space:nowrap;">1393.29</div><div style="position:absolute;left:139px;width:2000px;text-align:right;top:980.95px;font:400 12px/12px 'Liberation Serif', serif;color:#000;white-space:nowrap;">464.38</div><div style="position:absolute;left:283px;width:2000px;text-align:right;top:980.95px;font:400 12px/12px 'Liberation Serif', serif;color:#000;white-space:nowrap;">1</div><div style="position:absolute;left:393px;width:2000px;text-align:right;top:980.95px;font:400 12px/12px 'Liberation Serif', serif;color:#000;white-space:nowrap;">0</div><div style="position:absolute;left:2405px;top:980.95px;font:400 12px/12px 'Liberation Serif', serif;color:#000;white-space:nowrap;">КЛ0111344</div><div style="position:absolute;left:18px;top:1001.95px;font:400 12px/12px 'Liberation Serif', serif;color:#000;white-space:nowrap;">8</div><div style="position:absolute;left:50px;top:1001.95px;font:400 12px/12px 'Liberation Serif', serif;color:#000;white-space:nowrap;">Лесан фарма</div><div style="position:absolute;left:168px;top:1001.95px;font:400 12px/12px 'Liberation Serif', serif;color:#000;white-space:nowrap;">КЛ0112907</div><div style="position:absolute;left:352px;top:1001.95px;font:400 12px/12px 'Liberation Serif', serif;color:#000;white-space:nowrap;">2020-09-29</div><div style="position:absolute;left:526px;top:1001.95px;font:400 12px/12px 'Liberation Serif', serif;color:#000;white-space:nowrap;">ПН_03324_000000317</div><div style="position:absolute;left:662px;top:1001.95px;font:400 12px/12px 'Liberation Serif', serif;color:#000;white-space:nowrap;">2020-09-29</div><div style="position:absolute;left:-1006px;width:2000px;text-align:right;top:1001.95px;font:400 12px/12px 'Liberation Serif', serif;color:#000;white-space:nowrap;">210.36</div><div style="position:absolute;left:-820px;width:2000px;text-align:right;top:1001.95px;font:400 12px/12px 'Liberation Serif', serif;color:#000;white-space:nowrap;">35.06</div><div style="position:absolute;left:-605px;width:2000px;text-align:right;top:1001.95px;font:400 12px/12px 'Liberation Serif', serif;color:#000;white-space:nowrap;">210.36</div><div style="position:absolute;left:-371px;width:2000px;text-align:right;top:1001.95px;font:400 12px/12px 'Liberation Serif', serif;color:#000;white-space:nowrap;">175.30</div><div style="position:absolute;left:-142px;width:2000px;text-align:right;top:1001.95px;font:400 12px/12px 'Liberation Serif', serif;color:#000;white-space:nowrap;">175.30</div><div style="position:absolute;left:14px;width:2000px;text-align:right;top:1001.95px;font:400 12px/12px 'Liberation Serif', serif;color:#000;white-space:nowrap;">315.54</div><div style="position:absolute;left:139px;width:2000px;text-align:right;top:1001.95px;font:400 12px/12px 'Liberation Serif', serif;color:#000;white-space:nowrap;">105.18</div><div style="position:absolute;left:283px;width:2000px;text-align:right;top:1001.95px;font:400 12px/12px 'Liberation Serif', serif;color:#000;white-space:nowrap;">1</div><div style="position:absolute;left:393px;width:2000px;text-align:right;top:1001.95px;font:400 12px/12px 'Liberation Serif', serif;color:#000;white-space:nowrap;">0</div><div style="position:absolute;left:2405px;top:1001.95px;font:400 12px/12px 'Liberation Serif', serif;color:#000;white-space:nowrap;">КЛ0112907</div><div style="position:absolute;left:18px;top:1022.95px;font:400 12px/12px 'Liberation Serif', serif;color:#000;white-space:nowrap;">9</div><div style="position:absolute;left:50px;top:1022.95px;font:400 12px/12px 'Liberation Serif', serif;color:#000;white-space:nowrap;">Лесан фарма</div><div style="position:absolute;left:168px;top:1022.95px;font:400 12px/12px 'Liberation Serif', serif;color:#000;white-space:nowrap;">КЛ0116494</div><div style="position:absolute;left:352px;top:1022.95px;font:400 12px/12px 'Liberation Serif', serif;color:#000;white-space:nowrap;">2020-10-06</div><div style="position:absolute;left:526px;top:1022.95px;font:400 12px/12px 'Liberation Serif', serif;color:#000;white-space:nowrap;">ПН_03324_000000319</div><div style="position:absolute;left:662px;top:1022.95px;font:400 12px/12px 'Liberation Serif', serif;color:#000;white-space:nowrap;">2020-10-06</div><div style="position:absolute;left:-1006px;width:2000px;text-align:right;top:1022.95px;font:400 12px/12px 'Liberation Serif', serif;color:#000;white-space:nowrap;">3405.57</div><div style="position:absolute;left:-820px;width:2000px;text-align:right;top:1022.95px;font:400 12px/12px 'Liberation Serif', serif;color:#000;white-space:nowrap;">309.60</div><div style="position:absolute;left:-605px;width:2000px;text-align:right;top:1022.95px;font:400 12px/12px 'Liberation Serif', serif;color:#000;white-space:nowrap;">3405.57</div><div style="position:absolute;left:-371px;width:2000px;text-align:right;top:1022.95px;font:400 12px/12px 'Liberation Serif', serif;color:#000;white-space:nowrap;">3095.97</div><div style="position:absolute;left:-142px;width:2000px;text-align:right;top:1022.95px;font:400 12px/12px 'Liberation Serif', serif;color:#000;white-space:nowrap;">3095.97</div><div style="position:absolute;left:14px;width:2000px;text-align:right;top:1022.95px;font:400 12px/12px 'Liberation Serif', serif;color:#000;white-space:nowrap;">4914.69</div><div style="position:absolute;left:139px;width:2000px;text-align:right;top:1022.95px;font:400 12px/12px 'Liberation Serif', serif;color:#000;white-space:nowrap;">1509.12</div><div style="position:absolute;left:283px;width:2000px;text-align:right;top:1022.95px;font:400 12px/12px 'Liberation Serif', serif;color:#000;white-space:nowrap;">1</div><div style="position:absolute;left:393px;width:2000px;text-align:right;top:1022.95px;font:400 12px/12px 'Liberation Serif', serif;color:#000;white-space:nowrap;">0</div><div style="position:absolute;left:2405px;top:1022.95px;font:400 12px/12px 'Liberation Serif', serif;color:#000;white-space:nowrap;">КЛ0116494</div><div style="position:absolute;left:15px;top:1039px;width:2519px;height:21px;background:#c8fcfc"></div><div style="position:absolute;left:26px;top:1043.95px;font:400 12px/12px 'Liberation Serif', serif;color:#000;white-space:nowrap;">Итого Лесан фарма</div><div style="position:absolute;left:-1006px;width:2000px;text-align:right;top:1043.95px;font:400 12px/12px 'Liberation Serif', serif;color:#000;white-space:nowrap;">4544.84</div><div style="position:absolute;left:-820px;width:2000px;text-align:right;top:1043.95px;font:400 12px/12px 'Liberation Serif', serif;color:#000;white-space:nowrap;">499.48</div><div style="position:absolute;left:-605px;width:2000px;text-align:right;top:1043.95px;font:400 12px/12px 'Liberation Serif', serif;color:#000;white-space:nowrap;">4544.84</div><div style="position:absolute;left:-371px;width:2000px;text-align:right;top:1043.95px;font:400 12px/12px 'Liberation Serif', serif;color:#000;white-space:nowrap;">4045.36</div><div style="position:absolute;left:-142px;width:2000px;text-align:right;top:1043.95px;font:400 12px/12px 'Liberation Serif', serif;color:#000;white-space:nowrap;">4045.36</div><div style="position:absolute;left:14px;width:2000px;text-align:right;top:1043.95px;font:400 12px/12px 'Liberation Serif', serif;color:#000;white-space:nowrap;">6623.52</div><div style="position:absolute;left:139px;width:2000px;text-align:right;top:1043.95px;font:400 12px/12px 'Liberation Serif', serif;color:#000;white-space:nowrap;">2078.68</div><div style="position:absolute;left:283px;width:2000px;text-align:right;top:1043.95px;font:400 12px/12px 'Liberation Serif', serif;color:#000;white-space:nowrap;">3.00</div><div style="position:absolute;left:393px;width:2000px;text-align:right;top:1043.95px;font:400 12px/12px 'Liberation Serif', serif;color:#000;white-space:nowrap;">0.00</div><div style="position:absolute;left:1465.0px;width:2000px;text-align:center;top:1043.95px;font:400 12px/12px 'Liberation Serif', serif;color:#000;white-space:nowrap;">X</div><div style="position:absolute;left:18px;top:1064.95px;font:400 12px/12px 'Liberation Serif', serif;color:#000;white-space:nowrap;">10</div><div style="position:absolute;left:50px;top:1064.95px;font:400 12px/12px 'Liberation Serif', serif;color:#000;white-space:nowrap;">ПУЛЬС Краснодар</div><div style="position:absolute;left:168px;top:1064.95px;font:400 12px/12px 'Liberation Serif', serif;color:#000;white-space:nowrap;">КРР00634944</div><div style="position:absolute;left:352px;top:1064.95px;font:400 12px/12px 'Liberation Serif', serif;color:#000;white-space:nowrap;">2020-06-24</div><div style="position:absolute;left:526px;top:1064.95px;font:400 12px/12px 'Liberation Serif', serif;color:#000;white-space:nowrap;">ПН_03324_000000305</div><div style="position:absolute;left:662px;top:1064.95px;font:400 12px/12px 'Liberation Serif', serif;color:#000;white-space:nowrap;">2020-09-18</div><div style="position:absolute;left:-1006px;width:2000px;text-align:right;top:1064.95px;font:400 12px/12px 'Liberation Serif', serif;color:#000;white-space:nowrap;">108.88</div><div style="position:absolute;left:-820px;width:2000px;text-align:right;top:1064.95px;font:400 12px/12px 'Liberation Serif', serif;color:#000;white-space:nowrap;">9.90</div><div style="position:absolute;left:-605px;width:2000px;text-align:right;top:1064.95px;font:400 12px/12px 'Liberation Serif', serif;color:#000;white-space:nowrap;">108.88</div><div style="position:absolute;left:-371px;width:2000px;text-align:right;top:1064.95px;font:400 12px/12px 'Liberation Serif', serif;color:#000;white-space:nowrap;">98.98</div><div style="position:absolute;left:-142px;width:2000px;text-align:right;top:1064.95px;font:400 12px/12px 'Liberation Serif', serif;color:#000;white-space:nowrap;">98.98</div><div style="position:absolute;left:14px;width:2000px;text-align:right;top:1064.95px;font:400 12px/12px 'Liberation Serif', serif;color:#000;white-space:nowrap;">130.86</div><div style="position:absolute;left:139px;width:2000px;text-align:right;top:1064.95px;font:400 12px/12px 'Liberation Serif', serif;color:#000;white-space:nowrap;">21.98</div><div style="position:absolute;left:283px;width:2000px;text-align:right;top:1064.95px;font:400 12px/12px 'Liberation Serif', serif;color:#000;white-space:nowrap;">1</div><div style="position:absolute;left:393px;width:2000px;text-align:right;top:1064.95px;font:400 12px/12px 'Liberation Serif', serif;color:#000;white-space:nowrap;">0</div><div style="position:absolute;left:2405px;top:1064.95px;font:400 12px/12px 'Liberation Serif', serif;color:#000;white-space:nowrap;">КРР00634944</div><div style="position:absolute;left:18px;top:1085.95px;font:400 12px/12px 'Liberation Serif', serif;color:#000;white-space:nowrap;">11</div><div style="position:absolute;left:50px;top:1085.95px;font:400 12px/12px 'Liberation Serif', serif;color:#000;white-space:nowrap;">ПУЛЬС Краснодар</div><div style="position:absolute;left:168px;top:1085.95px;font:400 12px/12px 'Liberation Serif', serif;color:#000;white-space:nowrap;">КРР00999845</div><div style="position:absolute;left:352px;top:1085.95px;font:400 12px/12px 'Liberation Serif', serif;color:#000;white-space:nowrap;">2020-09-18</div><div style="position:absolute;left:526px;top:1085.95px;font:400 12px/12px 'Liberation Serif', serif;color:#000;white-space:nowrap;">ПН_03324_000000308</div><div style="position:absolute;left:662px;top:1085.95px;font:400 12px/12px 'Liberation Serif', serif;color:#000;white-space:nowrap;">2020-09-19</div><div style="position:absolute;left:-1006px;width:2000px;text-align:right;top:1085.95px;font:400 12px/12px 'Liberation Serif', serif;color:#000;white-space:nowrap;">5382.58</div><div style="position:absolute;left:-820px;width:2000px;text-align:right;top:1085.95px;font:400 12px/12px 'Liberation Serif', serif;color:#000;white-space:nowrap;">489.33</div><div style="position:absolute;left:-605px;width:2000px;text-align:right;top:1085.95px;font:400 12px/12px 'Liberation Serif', serif;color:#000;white-space:nowrap;">5382.58</div><div style="position:absolute;left:-371px;width:2000px;text-align:right;top:1085.95px;font:400 12px/12px 'Liberation Serif', serif;color:#000;white-space:nowrap;">4893.25</div><div style="position:absolute;left:-142px;width:2000px;text-align:right;top:1085.95px;font:400 12px/12px 'Liberation Serif', serif;color:#000;white-space:nowrap;">4893.25</div><div style="position:absolute;left:14px;width:2000px;text-align:right;top:1085.95px;font:400 12px/12px 'Liberation Serif', serif;color:#000;white-space:nowrap;">7429.23</div><div style="position:absolute;left:139px;width:2000px;text-align:right;top:1085.95px;font:400 12px/12px 'Liberation Serif', serif;color:#000;white-space:nowrap;">2046.65</div><div style="position:absolute;left:283px;width:2000px;text-align:right;top:1085.95px;font:400 12px/12px 'Liberation Serif', serif;color:#000;white-space:nowrap;">1</div><div style="position:absolute;left:393px;width:2000px;text-align:right;top:1085.95px;font:400 12px/12px 'Liberation Serif', serif;color:#000;white-space:nowrap;">0</div><div style="position:absolute;left:2405px;top:1085.95px;font:400 12px/12px 'Liberation Serif', serif;color:#000;white-space:nowrap;">КРР00999845</div><div style="position:absolute;left:18px;top:1106.95px;font:400 12px/12px 'Liberation Serif', serif;color:#000;white-space:nowrap;">12</div><div style="position:absolute;left:50px;top:1106.95px;font:400 12px/12px 'Liberation Serif', serif;color:#000;white-space:nowrap;">ПУЛЬС Краснодар</div><div style="position:absolute;left:168px;top:1106.95px;font:400 12px/12px 'Liberation Serif', serif;color:#000;white-space:nowrap;">КРР00999560</div><div style="position:absolute;left:352px;top:1106.95px;font:400 12px/12px 'Liberation Serif', serif;color:#000;white-space:nowrap;">2020-09-18</div><div style="position:absolute;left:526px;top:1106.95px;font:400 12px/12px 'Liberation Serif', serif;color:#000;white-space:nowrap;">ПН_03324_000000307</div><div style="position:absolute;left:662px;top:1106.95px;font:400 12px/12px 'Liberation Serif', serif;color:#000;white-space:nowrap;">2020-09-19</div><div style="position:absolute;left:-1006px;width:2000px;text-align:right;top:1106.95px;font:400 12px/12px 'Liberation Serif', serif;color:#000;white-space:nowrap;">24894.19</div><div style="position:absolute;left:-820px;width:2000px;text-align:right;top:1106.95px;font:400 12px/12px 'Liberation Serif', serif;color:#000;white-space:nowrap;">2325.24</div><div style="position:absolute;left:-605px;width:2000px;text-align:right;top:1106.95px;font:400 12px/12px 'Liberation Serif', serif;color:#000;white-space:nowrap;">24894.19</div><div style="position:absolute;left:-371px;width:2000px;text-align:right;top:1106.95px;font:400 12px/12px 'Liberation Serif', serif;color:#000;white-space:nowrap;">22568.95</div><div style="position:absolute;left:-142px;width:2000px;text-align:right;top:1106.95px;font:400 12px/12px 'Liberation Serif', serif;color:#000;white-space:nowrap;">22568.95</div><div style="position:absolute;left:14px;width:2000px;text-align:right;top:1106.95px;font:400 12px/12px 'Liberation Serif', serif;color:#000;white-space:nowrap;">34696.46</div><div style="position:absolute;left:139px;width:2000px;text-align:right;top:1106.95px;font:400 12px/12px 'Liberation Serif', serif;color:#000;white-space:nowrap;">9802.27</div><div style="position:absolute;left:283px;width:2000px;text-align:right;top:1106.95px;font:400 12px/12px 'Liberation Serif', serif;color:#000;white-space:nowrap;">1</div><div style="position:absolute;left:393px;width:2000px;text-align:right;top:1106.95px;font:400 12px/12px 'Liberation Serif', serif;color:#000;white-space:nowrap;">0</div><div style="position:absolute;left:2405px;top:1106.95px;font:400 12px/12px 'Liberation Serif', serif;color:#000;white-space:nowrap;">КРР00999560</div><div style="position:absolute;left:18px;top:1127.95px;font:400 12px/12px 'Liberation Serif', serif;color:#000;white-space:nowrap;">13</div><div style="position:absolute;left:50px;top:1127.95px;font:400 12px/12px 'Liberation Serif', serif;color:#000;white-space:nowrap;">ПУЛЬС Краснодар</div><div style="position:absolute;left:168px;top:1127.95px;font:400 12px/12px 'Liberation Serif', serif;color:#000;white-space:nowrap;">КРР01026325</div><div style="position:absolute;left:352px;top:1127.95px;font:400 12px/12px 'Liberation Serif', serif;color:#000;white-space:nowrap;">2020-09-24</div><div style="position:absolute;left:526px;top:1127.95px;font:400 12px/12px 'Liberation Serif', serif;color:#000;white-space:nowrap;">ПН_03324_000000315</div><div style="position:absolute;left:662px;top:1127.95px;font:400 12px/12px 'Liberation Serif', serif;color:#000;white-space:nowrap;">2020-09-28</div><div style="position:absolute;left:-1006px;width:2000px;text-align:right;top:1127.95px;font:400 12px/12px 'Liberation Serif', serif;color:#000;white-space:nowrap;">13149.00</div><div style="position:absolute;left:-820px;width:2000px;text-align:right;top:1127.95px;font:400 12px/12px 'Liberation Serif', serif;color:#000;white-space:nowrap;">1240.92</div><div style="position:absolute;left:-605px;width:2000px;text-align:right;top:1127.95px;font:400 12px/12px 'Liberation Serif', serif;color:#000;white-space:nowrap;">13149.00</div><div style="position:absolute;left:-371px;width:2000px;text-align:right;top:1127.95px;font:400 12px/12px 'Liberation Serif', serif;color:#000;white-space:nowrap;">11908.08</div><div style="position:absolute;left:-142px;width:2000px;text-align:right;top:1127.95px;font:400 12px/12px 'Liberation Serif', serif;color:#000;white-space:nowrap;">11908.08</div><div style="position:absolute;left:14px;width:2000px;text-align:right;top:1127.95px;font:400 12px/12px 'Liberation Serif', serif;color:#000;white-space:nowrap;">19107.98</div><div style="position:absolute;left:139px;width:2000px;text-align:right;top:1127.95px;font:400 12px/12px 'Liberation Serif', serif;color:#000;white-space:nowrap;">5958.98</div><div style="position:absolute;left:283px;width:2000px;text-align:right;top:1127.95px;font:400 12px/12px 'Liberation Serif', serif;color:#000;white-space:nowrap;">1</div><div style="position:absolute;left:393px;width:2000px;text-align:right;top:1127.95px;font:400 12px/12px 'Liberation Serif', serif;color:#000;white-space:nowrap;">0</div><div style="position:absolute;left:2405px;top:1127.95px;font:400 12px/12px 'Liberation Serif', serif;color:#000;white-space:nowrap;">КРР01026325</div><div style="position:absolute;left:18px;top:1148.95px;font:400 12px/12px 'Liberation Serif', serif;color:#000;white-space:nowrap;">14</div><div style="position:absolute;left:50px;top:1148.95px;font:400 12px/12px 'Liberation Serif', serif;color:#000;white-space:nowrap;">ПУЛЬС Краснодар</div><div style="position:absolute;left:168px;top:1148.95px;font:400 12px/12px 'Liberation Serif', serif;color:#000;white-space:nowrap;">КРР01042408</div><div style="position:absolute;left:352px;top:1148.95px;font:400 12px/12px 'Liberation Serif', serif;color:#000;white-space:nowrap;">2020-09-28</div><div style="position:absolute;left:526px;top:1148.95px;font:400 12px/12px 'Liberation Serif', serif;color:#000;white-space:nowrap;">ПН_03324_000000316</div><div style="position:absolute;left:662px;top:1148.95px;font:400 12px/12px 'Liberation Serif', serif;color:#000;white-space:nowrap;">2020-09-29</div><div style="position:absolute;left:-1006px;width:2000px;text-align:right;top:1148.95px;font:400 12px/12px 'Liberation Serif', serif;color:#000;white-space:nowrap;">4175.05</div><div style="position:absolute;left:-820px;width:2000px;text-align:right;top:1148.95px;font:400 12px/12px 'Liberation Serif', serif;color:#000;white-space:nowrap;">379.56</div><div style="position:absolute;left:-605px;width:2000px;text-align:right;top:1148.95px;font:400 12px/12px 'Liberation Serif', serif;color:#000;white-space:nowrap;">4175.05</div><div style="position:absolute;left:-371px;width:2000px;text-align:right;top:1148.95px;font:400 12px/12px 'Liberation Serif', serif;color:#000;white-space:nowrap;">3795.49</div><div style="position:absolute;left:-142px;width:2000px;text-align:right;top:1148.95px;font:400 12px/12px 'Liberation Serif', serif;color:#000;white-space:nowrap;">3795.49</div><div style="position:absolute;left:14px;width:2000px;text-align:right;top:1148.95px;font:400 12px/12px 'Liberation Serif', serif;color:#000;white-space:nowrap;">5979.28</div><div style="position:absolute;left:139px;width:2000px;text-align:right;top:1148.95px;font:400 12px/12px 'Liberation Serif', serif;color:#000;white-space:nowrap;">1804.23</div><div style="position:absolute;left:283px;width:2000px;text-align:right;top:1148.95px;font:400 12px/12px 'Liberation Serif', serif;color:#000;white-space:nowrap;">1</div><div style="position:absolute;left:393px;width:2000px;text-align:right;top:1148.95px;font:400 12px/12px 'Liberation Serif', serif;color:#000;white-space:nowrap;">0</div><div style="position:absolute;left:2405px;top:1148.95px;font:400 12px/12px 'Liberation Serif', serif;color:#000;white-space:nowrap;">КРР01042408</div><div style="position:absolute;left:18px;top:1169.95px;font:400 12px/12px 'Liberation Serif', serif;color:#000;white-space:nowrap;">15</div><div style="position:absolute;left:50px;top:1169.95px;font:400 12px/12px 'Liberation Serif', serif;color:#000;white-space:nowrap;">ПУЛЬС Краснодар</div><div style="position:absolute;left:168px;top:1169.95px;font:400 12px/12px 'Liberation Serif', serif;color:#000;white-space:nowrap;">КРР01074382</div><div style="position:absolute;left:352px;top:1169.95px;font:400 12px/12px 'Liberation Serif', serif;color:#000;white-space:nowrap;">2020-10-05</div><div style="position:absolute;left:526px;top:1169.95px;font:400 12px/12px 'Liberation Serif', serif;color:#000;white-space:nowrap;">ПН_03324_000000320</div><div style="position:absolute;left:662px;top:1169.95px;font:400 12px/12px 'Liberation Serif', serif;color:#000;white-space:nowrap;">2020-10-06</div><div style="position:absolute;left:-1006px;width:2000px;text-align:right;top:1169.95px;font:400 12px/12px 'Liberation Serif', serif;color:#000;white-space:nowrap;">32929.38</div><div style="position:absolute;left:-820px;width:2000px;text-align:right;top:1169.95px;font:400 12px/12px 'Liberation Serif', serif;color:#000;white-space:nowrap;">3141.56</div><div style="position:absolute;left:-605px;width:2000px;text-align:right;top:1169.95px;font:400 12px/12px 'Liberation Serif', serif;color:#000;white-space:nowrap;">32929.38</div><div style="position:absolute;left:-371px;width:2000px;text-align:right;top:1169.95px;font:400 12px/12px 'Liberation Serif', serif;color:#000;white-space:nowrap;">29787.82</div><div style="position:absolute;left:-142px;width:2000px;text-align:right;top:1169.95px;font:400 12px/12px 'Liberation Serif', serif;color:#000;white-space:nowrap;">29787.82</div><div style="position:absolute;left:14px;width:2000px;text-align:right;top:1169.95px;font:400 12px/12px 'Liberation Serif', serif;color:#000;white-space:nowrap;">47361.57</div><div style="position:absolute;left:139px;width:2000px;text-align:right;top:1169.95px;font:400 12px/12px 'Liberation Serif', serif;color:#000;white-space:nowrap;">14432.19</div><div style="position:absolute;left:283px;width:2000px;text-align:right;top:1169.95px;font:400 12px/12px 'Liberation Serif', serif;color:#000;white-space:nowrap;">1</div><div style="position:absolute;left:393px;width:2000px;text-align:right;top:1169.95px;font:400 12px/12px 'Liberation Serif', serif;color:#000;white-space:nowrap;">0</div><div style="position:absolute;left:2405px;top:1169.95px;font:400 12px/12px 'Liberation Serif', serif;color:#000;white-space:nowrap;">КРР01074382</div><div style="position:absolute;left:15px;top:1186px;width:2519px;height:21px;background:#c8fcfc"></div><div style="position:absolute;left:26px;top:1190.95px;font:400 12px/12px 'Liberation Serif', serif;color:#000;white-space:nowrap;">Итого ПУЛЬС Краснодар</div><div style="position:absolute;left:-1006px;width:2000px;text-align:right;top:1190.95px;font:400 12px/12px 'Liberation Serif', serif;color:#000;white-space:nowrap;">80639.08</div><div style="position:absolute;left:-820px;width:2000px;text-align:right;top:1190.95px;font:400 12px/12px 'Liberation Serif', serif;color:#000;white-space:nowrap;">7586.51</div><div style="position:absolute;left:-605px;width:2000px;text-align:right;top:1190.95px;font:400 12px/12px 'Liberation Serif', serif;color:#000;white-space:nowrap;">80639.08</div><div style="position:absolute;left:-371px;width:2000px;text-align:right;top:1190.95px;font:400 12px/12px 'Liberation Serif', serif;color:#000;white-space:nowrap;">73052.57</div><div style="position:absolute;left:-142px;width:2000px;text-align:right;top:1190.95px;font:400 12px/12px 'Liberation Serif', serif;color:#000;white-space:nowrap;">73052.57</div><div style="position:absolute;left:14px;width:2000px;text-align:right;top:1190.95px;font:400 12px/12px 'Liberation Serif', serif;color:#000;white-space:nowrap;">114705.38</div><div style="position:absolute;left:139px;width:2000px;text-align:right;top:1190.95px;font:400 12px/12px 'Liberation Serif', serif;color:#000;white-space:nowrap;">34066.30</div><div style="position:absolute;left:283px;width:2000px;text-align:right;top:1190.95px;font:400 12px/12px 'Liberation Serif', serif;color:#000;white-space:nowrap;">6.00</div><div style="position:absolute;left:393px;width:2000px;text-align:right;top:1190.95px;font:400 12px/12px 'Liberation Serif', serif;color:#000;white-space:nowrap;">0.00</div><div style="position:absolute;left:1465.0px;width:2000px;text-align:center;top:1190.95px;font:400 12px/12px 'Liberation Serif', serif;color:#000;white-space:nowrap;">X</div><div style="position:absolute;left:18px;top:1211.95px;font:400 12px/12px 'Liberation Serif', serif;color:#000;white-space:nowrap;">16</div><div style="position:absolute;left:50px;top:1211.95px;font:400 12px/12px 'Liberation Serif', serif;color:#000;white-space:nowrap;">Фармкомплект</div><div style="position:absolute;left:168px;top:1211.95px;font:400 12px/12px 'Liberation Serif', serif;color:#000;white-space:nowrap;">ФК003631135</div><div style="position:absolute;left:352px;top:1211.95px;font:400 12px/12px 'Liberation Serif', serif;color:#000;white-space:nowrap;">2020-09-08</div><div style="position:absolute;left:526px;top:1211.95px;font:400 12px/12px 'Liberation Serif', serif;color:#000;white-space:nowrap;">ПН_03324_000000296</div><div style="position:absolute;left:662px;top:1211.95px;font:400 12px/12px 'Liberation Serif', serif;color:#000;white-space:nowrap;">2020-09-14</div><div style="position:absolute;left:-1006px;width:2000px;text-align:right;top:1211.95px;font:400 12px/12px 'Liberation Serif', serif;color:#000;white-space:nowrap;">1514.30</div><div style="position:absolute;left:-820px;width:2000px;text-align:right;top:1211.95px;font:400 12px/12px 'Liberation Serif', serif;color:#000;white-space:nowrap;">137.66</div><div style="position:absolute;left:-605px;width:2000px;text-align:right;top:1211.95px;font:400 12px/12px 'Liberation Serif', serif;color:#000;white-space:nowrap;">1514.30</div><div style="position:absolute;left:-371px;width:2000px;text-align:right;top:1211.95px;font:400 12px/12px 'Liberation Serif', serif;color:#000;white-space:nowrap;">1376.64</div><div style="position:absolute;left:-142px;width:2000px;text-align:right;top:1211.95px;font:400 12px/12px 'Liberation Serif', serif;color:#000;white-space:nowrap;">1376.64</div><div style="position:absolute;left:14px;width:2000px;text-align:right;top:1211.95px;font:400 12px/12px 'Liberation Serif', serif;color:#000;white-space:nowrap;">1806.10</div><div style="position:absolute;left:139px;width:2000px;text-align:right;top:1211.95px;font:400 12px/12px 'Liberation Serif', serif;color:#000;white-space:nowrap;">291.80</div><div style="position:absolute;left:283px;width:2000px;text-align:right;top:1211.95px;font:400 12px/12px 'Liberation Serif', serif;color:#000;white-space:nowrap;">1</div><div style="position:absolute;left:393px;width:2000px;text-align:right;top:1211.95px;font:400 12px/12px 'Liberation Serif', serif;color:#000;white-space:nowrap;">0</div><div style="position:absolute;left:2405px;top:1211.95px;font:400 12px/12px 'Liberation Serif', serif;color:#000;white-space:nowrap;">ФК003631135</div><div style="position:absolute;left:18px;top:1232.95px;font:400 12px/12px 'Liberation Serif', serif;color:#000;white-space:nowrap;">17</div><div style="position:absolute;left:50px;top:1232.95px;font:400 12px/12px 'Liberation Serif', serif;color:#000;white-space:nowrap;">Фармкомплект</div><div style="position:absolute;left:168px;top:1232.95px;font:400 12px/12px 'Liberation Serif', serif;color:#000;white-space:nowrap;">ФК003594160</div><div style="position:absolute;left:352px;top:1232.95px;font:400 12px/12px 'Liberation Serif', serif;color:#000;white-space:nowrap;">2020-09-07</div><div style="position:absolute;left:526px;top:1232.95px;font:400 12px/12px 'Liberation Serif', serif;color:#000;white-space:nowrap;">ПН_03324_000000303</div><div style="position:absolute;left:662px;top:1232.95px;font:400 12px/12px 'Liberation Serif', serif;color:#000;white-space:nowrap;">2020-09-14</div><div style="position:absolute;left:-1006px;width:2000px;text-align:right;top:1232.95px;font:400 12px/12px 'Liberation Serif', serif;color:#000;white-space:nowrap;">9752.90</div><div style="position:absolute;left:-820px;width:2000px;text-align:right;top:1232.95px;font:400 12px/12px 'Liberation Serif', serif;color:#000;white-space:nowrap;">886.63</div><div style="position:absolute;left:-605px;width:2000px;text-align:right;top:1232.95px;font:400 12px/12px 'Liberation Serif', serif;color:#000;white-space:nowrap;">9752.90</div><div style="position:absolute;left:-371px;width:2000px;text-align:right;top:1232.95px;font:400 12px/12px 'Liberation Serif', serif;color:#000;white-space:nowrap;">8866.27</div><div style="position:absolute;left:-142px;width:2000px;text-align:right;top:1232.95px;font:400 12px/12px 'Liberation Serif', serif;color:#000;white-space:nowrap;">8866.27</div><div style="position:absolute;left:14px;width:2000px;text-align:right;top:1232.95px;font:400 12px/12px 'Liberation Serif', serif;color:#000;white-space:nowrap;">12965.93</div><div style="position:absolute;left:139px;width:2000px;text-align:right;top:1232.95px;font:400 12px/12px 'Liberation Serif', serif;color:#000;white-space:nowrap;">3213.03</div><div style="position:absolute;left:283px;width:2000px;text-align:right;top:1232.95px;font:400 12px/12px 'Liberation Serif', serif;color:#000;white-space:nowrap;">1</div><div style="position:absolute;left:393px;width:2000px;text-align:right;top:1232.95px;font:400 12px/12px 'Liberation Serif', serif;color:#000;white-space:nowrap;">0</div><div style="position:absolute;left:2405px;top:1232.95px;font:400 12px/12px 'Liberation Serif', serif;color:#000;white-space:nowrap;">ФК003594160</div><div style="position:absolute;left:18px;top:1253.95px;font:400 12px/12px 'Liberation Serif', serif;color:#000;white-space:nowrap;">18</div><div style="position:absolute;left:50px;top:1253.95px;font:400 12px/12px 'Liberation Serif', serif;color:#000;white-space:nowrap;">Фармкомплект</div><div style="position:absolute;left:168px;top:1253.95px;font:400 12px/12px 'Liberation Serif', serif;color:#000;white-space:nowrap;">ФК003562271</div><div style="position:absolute;left:352px;top:1253.95px;font:400 12px/12px 'Liberation Serif', serif;color:#000;white-space:nowrap;">2020-09-03</div><div style="position:absolute;left:526px;top:1253.95px;font:400 12px/12px 'Liberation Serif', serif;color:#000;white-space:nowrap;">ПН_03324_000000298</div><div style="position:absolute;left:662px;top:1253.95px;font:400 12px/12px 'Liberation Serif', serif;color:#000;white-space:nowrap;">2020-09-14</div><div style="position:absolute;left:-1006px;width:2000px;text-align:right;top:1253.95px;font:400 12px/12px 'Liberation Serif', serif;color:#000;white-space:nowrap;">2401.50</div><div style="position:absolute;left:-820px;width:2000px;text-align:right;top:1253.95px;font:400 12px/12px 'Liberation Serif', serif;color:#000;white-space:nowrap;">218.32</div><div style="position:absolute;left:-605px;width:2000px;text-align:right;top:1253.95px;font:400 12px/12px 'Liberation Serif', serif;color:#000;white-space:nowrap;">2401.50</div><div style="position:absolute;left:-371px;width:2000px;text-align:right;top:1253.95px;font:400 12px/12px 'Liberation Serif', serif;color:#000;white-space:nowrap;">2183.18</div><div style="position:absolute;left:-142px;width:2000px;text-align:right;top:1253.95px;font:400 12px/12px 'Liberation Serif', serif;color:#000;white-space:nowrap;">2183.18</div><div style="position:absolute;left:14px;width:2000px;text-align:right;top:1253.95px;font:400 12px/12px 'Liberation Serif', serif;color:#000;white-space:nowrap;">2827.00</div><div style="position:absolute;left:139px;width:2000px;text-align:right;top:1253.95px;font:400 12px/12px 'Liberation Serif', serif;color:#000;white-space:nowrap;">425.50</div><div style="position:absolute;left:283px;width:2000px;text-align:right;top:1253.95px;font:400 12px/12px 'Liberation Serif', serif;color:#000;white-space:nowrap;">1</div><div style="position:absolute;left:393px;width:2000px;text-align:right;top:1253.95px;font:400 12px/12px 'Liberation Serif', serif;color:#000;white-space:nowrap;">0</div><div style="position:absolute;left:2405px;top:1253.95px;font:400 12px/12px 'Liberation Serif', serif;color:#000;white-space:nowrap;">ФК003562271</div><div style="position:absolute;left:18px;top:1274.95px;font:400 12px/12px 'Liberation Serif', serif;color:#000;white-space:nowrap;">19</div><div style="position:absolute;left:50px;top:1274.95px;font:400 12px/12px 'Liberation Serif', serif;color:#000;white-space:nowrap;">Фармкомплект</div><div style="position:absolute;left:168px;top:1274.95px;font:400 12px/12px 'Liberation Serif', serif;color:#000;white-space:nowrap;">ФК003609863</div><div style="position:absolute;left:352px;top:1274.95px;font:400 12px/12px 'Liberation Serif', serif;color:#000;white-space:nowrap;">2020-09-07</div><div style="position:absolute;left:526px;top:1274.95px;font:400 12px/12px 'Liberation Serif', serif;color:#000;white-space:nowrap;">ПН_03324_000000297</div><div style="position:absolute;left:662px;top:1274.95px;font:400 12px/12px 'Liberation Serif', serif;color:#000;white-space:nowrap;">2020-09-14</div><div style="position:absolute;left:-1006px;width:2000px;text-align:right;top:1274.95px;font:400 12px/12px 'Liberation Serif', serif;color:#000;white-space:nowrap;">4847.60</div><div style="position:absolute;left:-820px;width:2000px;text-align:right;top:1274.95px;font:400 12px/12px 'Liberation Serif', serif;color:#000;white-space:nowrap;">440.69</div><div style="position:absolute;left:-605px;width:2000px;text-align:right;top:1274.95px;font:400 12px/12px 'Liberation Serif', serif;color:#000;white-space:nowrap;">4847.60</div><div style="position:absolute;left:-371px;width:2000px;text-align:right;top:1274.95px;font:400 12px/12px 'Liberation Serif', serif;color:#000;white-space:nowrap;">4406.91</div><div style="position:absolute;left:-142px;width:2000px;text-align:right;top:1274.95px;font:400 12px/12px 'Liberation Serif', serif;color:#000;white-space:nowrap;">4406.91</div><div style="position:absolute;left:14px;width:2000px;text-align:right;top:1274.95px;font:400 12px/12px 'Liberation Serif', serif;color:#000;white-space:nowrap;">5736.20</div><div style="position:absolute;left:139px;width:2000px;text-align:right;top:1274.95px;font:400 12px/12px 'Liberation Serif', serif;color:#000;white-space:nowrap;">888.60</div><div style="position:absolute;left:283px;width:2000px;text-align:right;top:1274.95px;font:400 12px/12px 'Liberation Serif', serif;color:#000;white-space:nowrap;">1</div><div style="position:absolute;left:393px;width:2000px;text-align:right;top:1274.95px;font:400 12px/12px 'Liberation Serif', serif;color:#000;white-space:nowrap;">0</div><div style="position:absolute;left:2405px;top:1274.95px;font:400 12px/12px 'Liberation Serif', serif;color:#000;white-space:nowrap;">ФК003609863</div><div style="position:absolute;left:15px;top:808px;width:2519px;height:1px;background:#000"></div><div style="position:absolute;left:15px;top:829px;width:2519px;height:1px;background:#000"></div><div style="position:absolute;left:15px;top:850px;width:2519px;height:1px;background:#000"></div><div style="position:absolute;left:15px;top:871px;width:2519px;height:1px;background:#000"></div><div style="position:absolute;left:15px;top:892px;width:2519px;height:1px;background:#000"></div><div style="position:absolute;left:15px;top:913px;width:2519px;height:1px;background:#000"></div><div style="position:absolute;left:15px;top:934px;width:2519px;height:1px;background:#000"></div><div style="position:absolute;left:15px;top:955px;width:2519px;height:1px;background:#000"></div><div style="position:absolute;left:15px;top:976px;width:2519px;height:1px;background:#000"></div><div style="position:absolute;left:15px;top:997px;width:2519px;height:1px;background:#000"></div><div style="position:absolute;left:15px;top:1018px;width:2519px;height:1px;background:#000"></div><div style="position:absolute;left:15px;top:1039px;width:2519px;height:1px;background:#000"></div><div style="position:absolute;left:15px;top:1060px;width:2519px;height:1px;background:#000"></div><div style="position:absolute;left:15px;top:1081px;width:2519px;height:1px;background:#000"></div><div style="position:absolute;left:15px;top:1102px;width:2519px;height:1px;background:#000"></div><div style="position:absolute;left:15px;top:1123px;width:2519px;height:1px;background:#000"></div><div style="position:absolute;left:15px;top:1144px;width:2519px;height:1px;background:#000"></div><div style="position:absolute;left:15px;top:1165px;width:2519px;height:1px;background:#000"></div><div style="position:absolute;left:15px;top:1186px;width:2519px;height:1px;background:#000"></div><div style="position:absolute;left:15px;top:1207px;width:2519px;height:1px;background:#000"></div><div style="position:absolute;left:15px;top:1228px;width:2519px;height:1px;background:#000"></div><div style="position:absolute;left:15px;top:1249px;width:2519px;height:1px;background:#000"></div><div style="position:absolute;left:15px;top:1270px;width:2519px;height:1px;background:#000"></div><div style="position:absolute;left:15px;top:1291px;width:2519px;height:1px;background:#000"></div><div style="position:absolute;left:15px;top:771px;width:2519px;height:1px;background:#000"></div><div style="position:absolute;left:15px;top:771px;width:1px;height:37px;background:#000"></div><div style="position:absolute;left:40px;top:771px;width:1px;height:37px;background:#000"></div><div style="position:absolute;left:158px;top:771px;width:1px;height:37px;background:#000"></div><div style="position:absolute;left:342px;top:771px;width:1px;height:37px;background:#000"></div><div style="position:absolute;left:516px;top:771px;width:1px;height:37px;background:#000"></div><div style="position:absolute;left:652px;top:771px;width:1px;height:37px;background:#000"></div><div style="position:absolute;left:776px;top:771px;width:1px;height:37px;background:#000"></div><div style="position:absolute;left:996px;top:771px;width:1px;height:37px;background:#000"></div><div style="position:absolute;left:1182px;top:771px;width:1px;height:37px;background:#000"></div><div style="position:absolute;left:1397px;top:771px;width:1px;height:37px;background:#000"></div><div style="position:absolute;left:1631px;top:771px;width:1px;height:37px;background:#000"></div><div style="position:absolute;left:1860px;top:771px;width:1px;height:37px;background:#000"></div><div style="position:absolute;left:2016px;top:771px;width:1px;height:37px;background:#000"></div><div style="position:absolute;left:2141px;top:771px;width:1px;height:37px;background:#000"></div><div style="position:absolute;left:2285px;top:771px;width:1px;height:37px;background:#000"></div><div style="position:absolute;left:2395px;top:771px;width:1px;height:37px;background:#000"></div><div style="position:absolute;left:2533px;top:771px;width:1px;height:37px;background:#000"></div><div style="position:absolute;left:15px;top:808px;width:1px;height:21px;background:#000"></div><div style="position:absolute;left:40px;top:808px;width:1px;height:21px;background:#000"></div><div style="position:absolute;left:158px;top:808px;width:1px;height:21px;background:#000"></div><div style="position:absolute;left:342px;top:808px;width:1px;height:21px;background:#000"></div><div style="position:absolute;left:516px;top:808px;width:1px;height:21px;background:#000"></div><div style="position:absolute;left:652px;top:808px;width:1px;height:21px;background:#000"></div><div style="position:absolute;left:776px;top:808px;width:1px;height:21px;background:#000"></div><div style="position:absolute;left:996px;top:808px;width:1px;height:21px;background:#000"></div><div style="position:absolute;left:1182px;top:808px;width:1px;height:21px;background:#000"></div><div style="position:absolute;left:1397px;top:808px;width:1px;height:21px;background:#000"></div><div style="position:absolute;left:1631px;top:808px;width:1px;height:21px;background:#000"></div><div style="position:absolute;left:1860px;top:808px;width:1px;height:21px;background:#000"></div><div style="position:absolute;left:2016px;top:808px;width:1px;height:21px;background:#000"></div><div style="position:absolute;left:2141px;top:808px;width:1px;height:21px;background:#000"></div><div style="position:absolute;left:2285px;top:808px;width:1px;height:21px;background:#000"></div><div style="position:absolute;left:2395px;top:808px;width:1px;height:21px;background:#000"></div><div style="position:absolute;left:2533px;top:808px;width:1px;height:21px;background:#000"></div><div style="position:absolute;left:15px;top:829px;width:1px;height:21px;background:#000"></div><div style="position:absolute;left:776px;top:829px;width:1px;height:21px;background:#000"></div><div style="position:absolute;left:996px;top:829px;width:1px;height:21px;background:#000"></div><div style="position:absolute;left:1182px;top:829px;width:1px;height:21px;background:#000"></div><div style="position:absolute;left:1397px;top:829px;width:1px;height:21px;background:#000"></div><div style="position:absolute;left:1631px;top:829px;width:1px;height:21px;background:#000"></div><div style="position:absolute;left:1860px;top:829px;width:1px;height:21px;background:#000"></div><div style="position:absolute;left:2016px;top:829px;width:1px;height:21px;background:#000"></div><div style="position:absolute;left:2141px;top:829px;width:1px;height:21px;background:#000"></div><div style="position:absolute;left:2285px;top:829px;width:1px;height:21px;background:#000"></div><div style="position:absolute;left:2395px;top:829px;width:1px;height:21px;background:#000"></div><div style="position:absolute;left:2533px;top:829px;width:1px;height:21px;background:#000"></div><div style="position:absolute;left:15px;top:850px;width:1px;height:21px;background:#000"></div><div style="position:absolute;left:40px;top:850px;width:1px;height:21px;background:#000"></div><div style="position:absolute;left:158px;top:850px;width:1px;height:21px;background:#000"></div><div style="position:absolute;left:342px;top:850px;width:1px;height:21px;background:#000"></div><div style="position:absolute;left:516px;top:850px;width:1px;height:21px;background:#000"></div><div style="position:absolute;left:652px;top:850px;width:1px;height:21px;background:#000"></div><div style="position:absolute;left:776px;top:850px;width:1px;height:21px;background:#000"></div><div style="position:absolute;left:996px;top:850px;width:1px;height:21px;background:#000"></div><div style="position:absolute;left:1182px;top:850px;width:1px;height:21px;background:#000"></div><div style="position:absolute;left:1397px;top:850px;width:1px;height:21px;background:#000"></div><div style="position:absolute;left:1631px;top:850px;width:1px;height:21px;background:#000"></div><div style="position:absolute;left:1860px;top:850px;width:1px;height:21px;background:#000"></div><div style="position:absolute;left:2016px;top:850px;width:1px;height:21px;background:#000"></div><div style="position:absolute;left:2141px;top:850px;width:1px;height:21px;background:#000"></div><div style="position:absolute;left:2285px;top:850px;width:1px;height:21px;background:#000"></div><div style="position:absolute;left:2395px;top:850px;width:1px;height:21px;background:#000"></div><div style="position:absolute;left:2533px;top:850px;width:1px;height:21px;background:#000"></div><div style="position:absolute;left:15px;top:871px;width:1px;height:21px;background:#000"></div><div style="position:absolute;left:40px;top:871px;width:1px;height:21px;background:#000"></div><div style="position:absolute;left:158px;top:871px;width:1px;height:21px;background:#000"></div><div style="position:absolute;left:342px;top:871px;width:1px;height:21px;background:#000"></div><div style="position:absolute;left:516px;top:871px;width:1px;height:21px;background:#000"></div><div style="position:absolute;left:652px;top:871px;width:1px;height:21px;background:#000"></div><div style="position:absolute;left:776px;top:871px;width:1px;height:21px;background:#000"></div><div style="position:absolute;left:996px;top:871px;width:1px;height:21px;background:#000"></div><div style="position:absolute;left:1182px;top:871px;width:1px;height:21px;background:#000"></div><div style="position:absolute;left:1397px;top:871px;width:1px;height:21px;background:#000"></div><div style="position:absolute;left:1631px;top:871px;width:1px;height:21px;background:#000"></div><div style="position:absolute;left:1860px;top:871px;width:1px;height:21px;background:#000"></div><div style="position:absolute;left:2016px;top:871px;width:1px;height:21px;background:#000"></div><div style="position:absolute;left:2141px;top:871px;width:1px;height:21px;background:#000"></div><div style="position:absolute;left:2285px;top:871px;width:1px;height:21px;background:#000"></div><div style="position:absolute;left:2395px;top:871px;width:1px;height:21px;background:#000"></div><div style="position:absolute;left:2533px;top:871px;width:1px;height:21px;background:#000"></div><div style="position:absolute;left:15px;top:892px;width:1px;height:21px;background:#000"></div><div style="position:absolute;left:40px;top:892px;width:1px;height:21px;background:#000"></div><div style="position:absolute;left:158px;top:892px;width:1px;height:21px;background:#000"></div><div style="position:absolute;left:342px;top:892px;width:1px;height:21px;background:#000"></div><div style="position:absolute;left:516px;top:892px;width:1px;height:21px;background:#000"></div><div style="position:absolute;left:652px;top:892px;width:1px;height:21px;background:#000"></div><div style="position:absolute;left:776px;top:892px;width:1px;height:21px;background:#000"></div><div style="position:absolute;left:996px;top:892px;width:1px;height:21px;background:#000"></div><div style="position:absolute;left:1182px;top:892px;width:1px;height:21px;background:#000"></div><div style="position:absolute;left:1397px;top:892px;width:1px;height:21px;background:#000"></div><div style="position:absolute;left:1631px;top:892px;width:1px;height:21px;background:#000"></div><div style="position:absolute;left:1860px;top:892px;width:1px;height:21px;background:#000"></div><div style="position:absolute;left:2016px;top:892px;width:1px;height:21px;background:#000"></div><div style="position:absolute;left:2141px;top:892px;width:1px;height:21px;background:#000"></div><div style="position:absolute;left:2285px;top:892px;width:1px;height:21px;background:#000"></div><div style="position:absolute;left:2395px;top:892px;width:1px;height:21px;background:#000"></div><div style="position:absolute;left:2533px;top:892px;width:1px;height:21px;background:#000"></div><div style="position:absolute;left:15px;top:913px;width:1px;height:21px;background:#000"></div><div style="position:absolute;left:40px;top:913px;width:1px;height:21px;background:#000"></div><div style="position:absolute;left:158px;top:913px;width:1px;height:21px;background:#000"></div><div style="position:absolute;left:342px;top:913px;width:1px;height:21px;background:#000"></div><div style="position:absolute;left:516px;top:913px;width:1px;height:21px;background:#000"></div><div style="position:absolute;left:652px;top:913px;width:1px;height:21px;background:#000"></div><div style="position:absolute;left:776px;top:913px;width:1px;height:21px;background:#000"></div><div style="position:absolute;left:996px;top:913px;width:1px;height:21px;background:#000"></div><div style="position:absolute;left:1182px;top:913px;width:1px;height:21px;background:#000"></div><div style="position:absolute;left:1397px;top:913px;width:1px;height:21px;background:#000"></div><div style="position:absolute;left:1631px;top:913px;width:1px;height:21px;background:#000"></div><div style="position:absolute;left:1860px;top:913px;width:1px;height:21px;background:#000"></div><div style="position:absolute;left:2016px;top:913px;width:1px;height:21px;background:#000"></div><div style="position:absolute;left:2141px;top:913px;width:1px;height:21px;background:#000"></div><div style="position:absolute;left:2285px;top:913px;width:1px;height:21px;background:#000"></div><div style="position:absolute;left:2395px;top:913px;width:1px;height:21px;background:#000"></div><div style="position:absolute;left:2533px;top:913px;width:1px;height:21px;background:#000"></div><div style="position:absolute;left:15px;top:934px;width:1px;height:21px;background:#000"></div><div style="position:absolute;left:40px;top:934px;width:1px;height:21px;background:#000"></div><div style="position:absolute;left:158px;top:934px;width:1px;height:21px;background:#000"></div><div style="position:absolute;left:342px;top:934px;width:1px;height:21px;background:#000"></div><div style="position:absolute;left:516px;top:934px;width:1px;height:21px;background:#000"></div><div style="position:absolute;left:652px;top:934px;width:1px;height:21px;background:#000"></div><div style="position:absolute;left:776px;top:934px;width:1px;height:21px;background:#000"></div><div style="position:absolute;left:996px;top:934px;width:1px;height:21px;background:#000"></div><div style="position:absolute;left:1182px;top:934px;width:1px;height:21px;background:#000"></div><div style="position:absolute;left:1397px;top:934px;width:1px;height:21px;background:#000"></div><div style="position:absolute;left:1631px;top:934px;width:1px;height:21px;background:#000"></div><div style="position:absolute;left:1860px;top:934px;width:1px;height:21px;background:#000"></div><div style="position:absolute;left:2016px;top:934px;width:1px;height:21px;background:#000"></div><div style="position:absolute;left:2141px;top:934px;width:1px;height:21px;background:#000"></div><div style="position:absolute;left:2285px;top:934px;width:1px;height:21px;background:#000"></div><div style="position:absolute;left:2395px;top:934px;width:1px;height:21px;background:#000"></div><div style="position:absolute;left:2533px;top:934px;width:1px;height:21px;background:#000"></div><div style="position:absolute;left:15px;top:955px;width:1px;height:21px;background:#000"></div><div style="position:absolute;left:776px;top:955px;width:1px;height:21px;background:#000"></div><div style="position:absolute;left:996px;top:955px;width:1px;height:21px;background:#000"></div><div style="position:absolute;left:1182px;top:955px;width:1px;height:21px;background:#000"></div><div style="position:absolute;left:1397px;top:955px;width:1px;height:21px;background:#000"></div><div style="position:absolute;left:1631px;top:955px;width:1px;height:21px;background:#000"></div><div style="position:absolute;left:1860px;top:955px;width:1px;height:21px;background:#000"></div><div style="position:absolute;left:2016px;top:955px;width:1px;height:21px;background:#000"></div><div style="position:absolute;left:2141px;top:955px;width:1px;height:21px;background:#000"></div><div style="position:absolute;left:2285px;top:955px;width:1px;height:21px;background:#000"></div><div style="position:absolute;left:2395px;top:955px;width:1px;height:21px;background:#000"></div><div style="position:absolute;left:2533px;top:955px;width:1px;height:21px;background:#000"></div><div style="position:absolute;left:15px;top:976px;width:1px;height:21px;background:#000"></div><div style="position:absolute;left:40px;top:976px;width:1px;height:21px;background:#000"></div><div style="position:absolute;left:158px;top:976px;width:1px;height:21px;background:#000"></div><div style="position:absolute;left:342px;top:976px;width:1px;height:21px;background:#000"></div><div style="position:absolute;left:516px;top:976px;width:1px;height:21px;background:#000"></div><div style="position:absolute;left:652px;top:976px;width:1px;height:21px;background:#000"></div><div style="position:absolute;left:776px;top:976px;width:1px;height:21px;background:#000"></div><div style="position:absolute;left:996px;top:976px;width:1px;height:21px;background:#000"></div><div style="position:absolute;left:1182px;top:976px;width:1px;height:21px;background:#000"></div><div style="position:absolute;left:1397px;top:976px;width:1px;height:21px;background:#000"></div><div style="position:absolute;left:1631px;top:976px;width:1px;height:21px;background:#000"></div><div style="position:absolute;left:1860px;top:976px;width:1px;height:21px;background:#000"></div><div style="position:absolute;left:2016px;top:976px;width:1px;height:21px;background:#000"></div><div style="position:absolute;left:2141px;top:976px;width:1px;height:21px;background:#000"></div><div style="position:absolute;left:2285px;top:976px;width:1px;height:21px;background:#000"></div><div style="position:absolute;left:2395px;top:976px;width:1px;height:21px;background:#000"></div><div style="position:absolute;left:2533px;top:976px;width:1px;height:21px;background:#000"></div><div style="position:absolute;left:15px;top:997px;width:1px;height:21px;background:#000"></div><div style="position:absolute;left:40px;top:997px;width:1px;height:21px;background:#000"></div><div style="position:absolute;left:158px;top:997px;width:1px;height:21px;background:#000"></div><div style="position:absolute;left:342px;top:997px;width:1px;height:21px;background:#000"></div><div style="position:absolute;left:516px;top:997px;width:1px;height:21px;background:#000"></div><div style="position:absolute;left:652px;top:997px;width:1px;height:21px;background:#000"></div><div style="position:absolute;left:776px;top:997px;width:1px;height:21px;background:#000"></div><div style="position:absolute;left:996px;top:997px;width:1px;height:21px;background:#000"></div><div style="position:absolute;left:1182px;top:997px;width:1px;height:21px;background:#000"></div><div style="position:absolute;left:1397px;top:997px;width:1px;height:21px;background:#000"></div><div style="position:absolute;left:1631px;top:997px;width:1px;height:21px;background:#000"></div><div style="position:absolute;left:1860px;top:997px;width:1px;height:21px;background:#000"></div><div style="position:absolute;left:2016px;top:997px;width:1px;height:21px;background:#000"></div><div style="position:absolute;left:2141px;top:997px;width:1px;height:21px;background:#000"></div><div style="position:absolute;left:2285px;top:997px;width:1px;height:21px;background:#000"></div><div style="position:absolute;left:2395px;top:997px;width:1px;height:21px;background:#000"></div><div style="position:absolute;left:2533px;top:997px;width:1px;height:21px;background:#000"></div><div style="position:absolute;left:15px;top:1018px;width:1px;height:21px;background:#000"></div><div style="position:absolute;left:40px;top:1018px;width:1px;height:21px;background:#000"></div><div style="position:absolute;left:158px;top:1018px;width:1px;height:21px;background:#000"></div><div style="position:absolute;left:342px;top:1018px;width:1px;height:21px;background:#000"></div><div style="position:absolute;left:516px;top:1018px;width:1px;height:21px;background:#000"></div><div style="position:absolute;left:652px;top:1018px;width:1px;height:21px;background:#000"></div><div style="position:absolute;left:776px;top:1018px;width:1px;height:21px;background:#000"></div><div style="position:absolute;left:996px;top:1018px;width:1px;height:21px;background:#000"></div><div style="position:absolute;left:1182px;top:1018px;width:1px;height:21px;background:#000"></div><div style="position:absolute;left:1397px;top:1018px;width:1px;height:21px;background:#000"></div><div style="position:absolute;left:1631px;top:1018px;width:1px;height:21px;background:#000"></div><div style="position:absolute;left:1860px;top:1018px;width:1px;height:21px;background:#000"></div><div style="position:absolute;left:2016px;top:1018px;width:1px;height:21px;background:#000"></div><div style="position:absolute;left:2141px;top:1018px;width:1px;height:21px;background:#000"></div><div style="position:absolute;left:2285px;top:1018px;width:1px;height:21px;background:#000"></div><div style="position:absolute;left:2395px;top:1018px;width:1px;height:21px;background:#000"></div><div style="position:absolute;left:2533px;top:1018px;width:1px;height:21px;background:#000"></div><div style="position:absolute;left:15px;top:1039px;width:1px;height:21px;background:#000"></div><div style="position:absolute;left:776px;top:1039px;width:1px;height:21px;background:#000"></div><div style="position:absolute;left:996px;top:1039px;width:1px;height:21px;background:#000"></div><div style="position:absolute;left:1182px;top:1039px;width:1px;height:21px;background:#000"></div><div style="position:absolute;left:1397px;top:1039px;width:1px;height:21px;background:#000"></div><div style="position:absolute;left:1631px;top:1039px;width:1px;height:21px;background:#000"></div><div style="position:absolute;left:1860px;top:1039px;width:1px;height:21px;background:#000"></div><div style="position:absolute;left:2016px;top:1039px;width:1px;height:21px;background:#000"></div><div style="position:absolute;left:2141px;top:1039px;width:1px;height:21px;background:#000"></div><div style="position:absolute;left:2285px;top:1039px;width:1px;height:21px;background:#000"></div><div style="position:absolute;left:2395px;top:1039px;width:1px;height:21px;background:#000"></div><div style="position:absolute;left:2533px;top:1039px;width:1px;height:21px;background:#000"></div><div style="position:absolute;left:15px;top:1060px;width:1px;height:21px;background:#000"></div><div style="position:absolute;left:40px;top:1060px;width:1px;height:21px;background:#000"></div><div style="position:absolute;left:158px;top:1060px;width:1px;height:21px;background:#000"></div><div style="position:absolute;left:342px;top:1060px;width:1px;height:21px;background:#000"></div><div style="position:absolute;left:516px;top:1060px;width:1px;height:21px;background:#000"></div><div style="position:absolute;left:652px;top:1060px;width:1px;height:21px;background:#000"></div><div style="position:absolute;left:776px;top:1060px;width:1px;height:21px;background:#000"></div><div style="position:absolute;left:996px;top:1060px;width:1px;height:21px;background:#000"></div><div style="position:absolute;left:1182px;top:1060px;width:1px;height:21px;background:#000"></div><div style="position:absolute;left:1397px;top:1060px;width:1px;height:21px;background:#000"></div><div style="position:absolute;left:1631px;top:1060px;width:1px;height:21px;background:#000"></div><div style="position:absolute;left:1860px;top:1060px;width:1px;height:21px;background:#000"></div><div style="position:absolute;left:2016px;top:1060px;width:1px;height:21px;background:#000"></div><div style="position:absolute;left:2141px;top:1060px;width:1px;height:21px;background:#000"></div><div style="position:absolute;left:2285px;top:1060px;width:1px;height:21px;background:#000"></div><div style="position:absolute;left:2395px;top:1060px;width:1px;height:21px;background:#000"></div><div style="position:absolute;left:2533px;top:1060px;width:1px;height:21px;background:#000"></div><div style="position:absolute;left:15px;top:1081px;width:1px;height:21px;background:#000"></div><div style="position:absolute;left:40px;top:1081px;width:1px;height:21px;background:#000"></div><div style="position:absolute;left:158px;top:1081px;width:1px;height:21px;background:#000"></div><div style="position:absolute;left:342px;top:1081px;width:1px;height:21px;background:#000"></div><div style="position:absolute;left:516px;top:1081px;width:1px;height:21px;background:#000"></div><div style="position:absolute;left:652px;top:1081px;width:1px;height:21px;background:#000"></div><div style="position:absolute;left:776px;top:1081px;width:1px;height:21px;background:#000"></div><div style="position:absolute;left:996px;top:1081px;width:1px;height:21px;background:#000"></div><div style="position:absolute;left:1182px;top:1081px;width:1px;height:21px;background:#000"></div><div style="position:absolute;left:1397px;top:1081px;width:1px;height:21px;background:#000"></div><div style="position:absolute;left:1631px;top:1081px;width:1px;height:21px;background:#000"></div><div style="position:absolute;left:1860px;top:1081px;width:1px;height:21px;background:#000"></div><div style="position:absolute;left:2016px;top:1081px;width:1px;height:21px;background:#000"></div><div style="position:absolute;left:2141px;top:1081px;width:1px;height:21px;background:#000"></div><div style="position:absolute;left:2285px;top:1081px;width:1px;height:21px;background:#000"></div><div style="position:absolute;left:2395px;top:1081px;width:1px;height:21px;background:#000"></div><div style="position:absolute;left:2533px;top:1081px;width:1px;height:21px;background:#000"></div><div style="position:absolute;left:15px;top:1102px;width:1px;height:21px;background:#000"></div><div style="position:absolute;left:40px;top:1102px;width:1px;height:21px;background:#000"></div><div style="position:absolute;left:158px;top:1102px;width:1px;height:21px;background:#000"></div><div style="position:absolute;left:342px;top:1102px;width:1px;height:21px;background:#000"></div><div style="position:absolute;left:516px;top:1102px;width:1px;height:21px;background:#000"></div><div style="position:absolute;left:652px;top:1102px;width:1px;height:21px;background:#000"></div><div style="position:absolute;left:776px;top:1102px;width:1px;height:21px;background:#000"></div><div style="position:absolute;left:996px;top:1102px;width:1px;height:21px;background:#000"></div><div style="position:absolute;left:1182px;top:1102px;width:1px;height:21px;background:#000"></div><div style="position:absolute;left:1397px;top:1102px;width:1px;height:21px;background:#000"></div><div style="position:absolute;left:1631px;top:1102px;width:1px;height:21px;background:#000"></div><div style="position:absolute;left:1860px;top:1102px;width:1px;height:21px;background:#000"></div><div style="position:absolute;left:2016px;top:1102px;width:1px;height:21px;background:#000"></div><div style="position:absolute;left:2141px;top:1102px;width:1px;height:21px;background:#000"></div><div style="position:absolute;left:2285px;top:1102px;width:1px;height:21px;background:#000"></div><div style="position:absolute;left:2395px;top:1102px;width:1px;height:21px;background:#000"></div><div style="position:absolute;left:2533px;top:1102px;width:1px;height:21px;background:#000"></div><div style="position:absolute;left:15px;top:1123px;width:1px;height:21px;background:#000"></div><div style="position:absolute;left:40px;top:1123px;width:1px;height:21px;background:#000"></div><div style="position:absolute;left:158px;top:1123px;width:1px;height:21px;background:#000"></div><div style="position:absolute;left:342px;top:1123px;width:1px;height:21px;background:#000"></div><div style="position:absolute;left:516px;top:1123px;width:1px;height:21px;background:#000"></div><div style="position:absolute;left:652px;top:1123px;width:1px;height:21px;background:#000"></div><div style="position:absolute;left:776px;top:1123px;width:1px;height:21px;background:#000"></div><div style="position:absolute;left:996px;top:1123px;width:1px;height:21px;background:#000"></div><div style="position:absolute;left:1182px;top:1123px;width:1px;height:21px;background:#000"></div><div style="position:absolute;left:1397px;top:1123px;width:1px;height:21px;background:#000"></div><div style="position:absolute;left:1631px;top:1123px;width:1px;height:21px;background:#000"></div><div style="position:absolute;left:1860px;top:1123px;width:1px;height:21px;background:#000"></div><div style="position:absolute;left:2016px;top:1123px;width:1px;height:21px;background:#000"></div><div style="position:absolute;left:2141px;top:1123px;width:1px;height:21px;background:#000"></div><div style="position:absolute;left:2285px;top:1123px;width:1px;height:21px;background:#000"></div><div style="position:absolute;left:2395px;top:1123px;width:1px;height:21px;background:#000"></div><div style="position:absolute;left:2533px;top:1123px;width:1px;height:21px;background:#000"></div><div style="position:absolute;left:15px;top:1144px;width:1px;height:21px;background:#000"></div><div style="position:absolute;left:40px;top:1144px;width:1px;height:21px;background:#000"></div><div style="position:absolute;left:158px;top:1144px;width:1px;height:21px;background:#000"></div><div style="position:absolute;left:342px;top:1144px;width:1px;height:21px;background:#000"></div><div style="position:absolute;left:516px;top:1144px;width:1px;height:21px;background:#000"></div><div style="position:absolute;left:652px;top:1144px;width:1px;height:21px;background:#000"></div><div style="position:absolute;left:776px;top:1144px;width:1px;height:21px;background:#000"></div><div style="position:absolute;left:996px;top:1144px;width:1px;height:21px;background:#000"></div><div style="position:absolute;left:1182px;top:1144px;width:1px;height:21px;background:#000"></div><div style="position:absolute;left:1397px;top:1144px;width:1px;height:21px;background:#000"></div><div style="position:absolute;left:1631px;top:1144px;width:1px;height:21px;background:#000"></div><div style="position:absolute;left:1860px;top:1144px;width:1px;height:21px;background:#000"></div><div style="position:absolute;left:2016px;top:1144px;width:1px;height:21px;background:#000"></div><div style="position:absolute;left:2141px;top:1144px;width:1px;height:21px;background:#000"></div><div style="position:absolute;left:2285px;top:1144px;width:1px;height:21px;background:#000"></div><div style="position:absolute;left:2395px;top:1144px;width:1px;height:21px;background:#000"></div><div style="position:absolute;left:2533px;top:1144px;width:1px;height:21px;background:#000"></div><div style="position:absolute;left:15px;top:1165px;width:1px;height:21px;background:#000"></div><div style="position:absolute;left:40px;top:1165px;width:1px;height:21px;background:#000"></div><div style="position:absolute;left:158px;top:1165px;width:1px;height:21px;background:#000"></div><div style="position:absolute;left:342px;top:1165px;width:1px;height:21px;background:#000"></div><div style="position:absolute;left:516px;top:1165px;width:1px;height:21px;background:#000"></div><div style="position:absolute;left:652px;top:1165px;width:1px;height:21px;background:#000"></div><div style="position:absolute;left:776px;top:1165px;width:1px;height:21px;background:#000"></div><div style="position:absolute;left:996px;top:1165px;width:1px;height:21px;background:#000"></div><div style="position:absolute;left:1182px;top:1165px;width:1px;height:21px;background:#000"></div><div style="position:absolute;left:1397px;top:1165px;width:1px;height:21px;background:#000"></div><div style="position:absolute;left:1631px;top:1165px;width:1px;height:21px;background:#000"></div><div style="position:absolute;left:1860px;top:1165px;width:1px;height:21px;background:#000"></div><div style="position:absolute;left:2016px;top:1165px;width:1px;height:21px;background:#000"></div><div style="position:absolute;left:2141px;top:1165px;width:1px;height:21px;background:#000"></div><div style="position:absolute;left:2285px;top:1165px;width:1px;height:21px;background:#000"></div><div style="position:absolute;left:2395px;top:1165px;width:1px;height:21px;background:#000"></div><div style="position:absolute;left:2533px;top:1165px;width:1px;height:21px;background:#000"></div><div style="position:absolute;left:15px;top:1186px;width:1px;height:21px;background:#000"></div><div style="position:absolute;left:776px;top:1186px;width:1px;height:21px;background:#000"></div><div style="position:absolute;left:996px;top:1186px;width:1px;height:21px;background:#000"></div><div style="position:absolute;left:1182px;top:1186px;width:1px;height:21px;background:#000"></div><div style="position:absolute;left:1397px;top:1186px;width:1px;height:21px;background:#000"></div><div style="position:absolute;left:1631px;top:1186px;width:1px;height:21px;background:#000"></div><div style="position:absolute;left:1860px;top:1186px;width:1px;height:21px;background:#000"></div><div style="position:absolute;left:2016px;top:1186px;width:1px;height:21px;background:#000"></div><div style="position:absolute;left:2141px;top:1186px;width:1px;height:21px;background:#000"></div><div style="position:absolute;left:2285px;top:1186px;width:1px;height:21px;background:#000"></div><div style="position:absolute;left:2395px;top:1186px;width:1px;height:21px;background:#000"></div><div style="position:absolute;left:2533px;top:1186px;width:1px;height:21px;background:#000"></div><div style="position:absolute;left:15px;top:1207px;width:1px;height:21px;background:#000"></div><div style="position:absolute;left:40px;top:1207px;width:1px;height:21px;background:#000"></div><div style="position:absolute;left:158px;top:1207px;width:1px;height:21px;background:#000"></div><div style="position:absolute;left:342px;top:1207px;width:1px;height:21px;background:#000"></div><div style="position:absolute;left:516px;top:1207px;width:1px;height:21px;background:#000"></div><div style="position:absolute;left:652px;top:1207px;width:1px;height:21px;background:#000"></div><div style="position:absolute;left:776px;top:1207px;width:1px;height:21px;background:#000"></div><div style="position:absolute;left:996px;top:1207px;width:1px;height:21px;background:#000"></div><div style="position:absolute;left:1182px;top:1207px;width:1px;height:21px;background:#000"></div><div style="position:absolute;left:1397px;top:1207px;width:1px;height:21px;background:#000"></div><div style="position:absolute;left:1631px;top:1207px;width:1px;height:21px;background:#000"></div><div style="position:absolute;left:1860px;top:1207px;width:1px;height:21px;background:#000"></div><div style="position:absolute;left:2016px;top:1207px;width:1px;height:21px;background:#000"></div><div style="position:absolute;left:2141px;top:1207px;width:1px;height:21px;background:#000"></div><div style="position:absolute;left:2285px;top:1207px;width:1px;height:21px;background:#000"></div><div style="position:absolute;left:2395px;top:1207px;width:1px;height:21px;background:#000"></div><div style="position:absolute;left:2533px;top:1207px;width:1px;height:21px;background:#000"></div><div style="position:absolute;left:15px;top:1228px;width:1px;height:21px;background:#000"></div><div style="position:absolute;left:40px;top:1228px;width:1px;height:21px;background:#000"></div><div style="position:absolute;left:158px;top:1228px;width:1px;height:21px;background:#000"></div><div style="position:absolute;left:342px;top:1228px;width:1px;height:21px;background:#000"></div><div style="position:absolute;left:516px;top:1228px;width:1px;height:21px;background:#000"></div><div style="position:absolute;left:652px;top:1228px;width:1px;height:21px;background:#000"></div><div style="position:absolute;left:776px;top:1228px;width:1px;height:21px;background:#000"></div><div style="position:absolute;left:996px;top:1228px;width:1px;height:21px;background:#000"></div><div style="position:absolute;left:1182px;top:1228px;width:1px;height:21px;background:#000"></div><div style="position:absolute;left:1397px;top:1228px;width:1px;height:21px;background:#000"></div><div style="position:absolute;left:1631px;top:1228px;width:1px;height:21px;background:#000"></div><div style="position:absolute;left:1860px;top:1228px;width:1px;height:21px;background:#000"></div><div style="position:absolute;left:2016px;top:1228px;width:1px;height:21px;background:#000"></div><div style="position:absolute;left:2141px;top:1228px;width:1px;height:21px;background:#000"></div><div style="position:absolute;left:2285px;top:1228px;width:1px;height:21px;background:#000"></div><div style="position:absolute;left:2395px;top:1228px;width:1px;height:21px;background:#000"></div><div style="position:absolute;left:2533px;top:1228px;width:1px;height:21px;background:#000"></div><div style="position:absolute;left:15px;top:1249px;width:1px;height:21px;background:#000"></div><div style="position:absolute;left:40px;top:1249px;width:1px;height:21px;background:#000"></div><div style="position:absolute;left:158px;top:1249px;width:1px;height:21px;background:#000"></div><div style="position:absolute;left:342px;top:1249px;width:1px;height:21px;background:#000"></div><div style="position:absolute;left:516px;top:1249px;width:1px;height:21px;background:#000"></div><div style="position:absolute;left:652px;top:1249px;width:1px;height:21px;background:#000"></div><div style="position:absolute;left:776px;top:1249px;width:1px;height:21px;background:#000"></div><div style="position:absolute;left:996px;top:1249px;width:1px;height:21px;background:#000"></div><div style="position:absolute;left:1182px;top:1249px;width:1px;height:21px;background:#000"></div><div style="position:absolute;left:1397px;top:1249px;width:1px;height:21px;background:#000"></div><div style="position:absolute;left:1631px;top:1249px;width:1px;height:21px;background:#000"></div><div style="position:absolute;left:1860px;top:1249px;width:1px;height:21px;background:#000"></div><div style="position:absolute;left:2016px;top:1249px;width:1px;height:21px;background:#000"></div><div style="position:absolute;left:2141px;top:1249px;width:1px;height:21px;background:#000"></div><div style="position:absolute;left:2285px;top:1249px;width:1px;height:21px;background:#000"></div><div style="position:absolute;left:2395px;top:1249px;width:1px;height:21px;background:#000"></div><div style="position:absolute;left:2533px;top:1249px;width:1px;height:21px;background:#000"></div><div style="position:absolute;left:15px;top:1270px;width:1px;height:21px;background:#000"></div><div style="position:absolute;left:40px;top:1270px;width:1px;height:21px;background:#000"></div><div style="position:absolute;left:158px;top:1270px;width:1px;height:21px;background:#000"></div><div style="position:absolute;left:342px;top:1270px;width:1px;height:21px;background:#000"></div><div style="position:absolute;left:516px;top:1270px;width:1px;height:21px;background:#000"></div><div style="position:absolute;left:652px;top:1270px;width:1px;height:21px;background:#000"></div><div style="position:absolute;left:776px;top:1270px;width:1px;height:21px;background:#000"></div><div style="position:absolute;left:996px;top:1270px;width:1px;height:21px;background:#000"></div><div style="position:absolute;left:1182px;top:1270px;width:1px;height:21px;background:#000"></div><div style="position:absolute;left:1397px;top:1270px;width:1px;height:21px;background:#000"></div><div style="position:absolute;left:1631px;top:1270px;width:1px;height:21px;background:#000"></div><div style="position:absolute;left:1860px;top:1270px;width:1px;height:21px;background:#000"></div><div style="position:absolute;left:2016px;top:1270px;width:1px;height:21px;background:#000"></div><div style="position:absolute;left:2141px;top:1270px;width:1px;height:21px;background:#000"></div><div style="position:absolute;left:2285px;top:1270px;width:1px;height:21px;background:#000"></div><div style="position:absolute;left:2395px;top:1270px;width:1px;height:21px;background:#000"></div><div style="position:absolute;left:2533px;top:1270px;width:1px;height:21px;background:#000"></div></div><div style="position:absolute;left:8px;top:1288px;width:2550px;height:40px;background:#f0f0f0;border-top:1px solid #a0a0a0;border-bottom:1px solid #a0a0a0;box-sizing:border-box"></div><div style="position:absolute;left:4px;top:1328px;width:2554px;height:2px;background:#fff"></div><div style="position:absolute;left:49.89px;top:1302.16px;font:400 12.8px/12.8px 'Liberation Sans', sans-serif;color:#000;white-space:nowrap;transform:scaleX(0.9827);transform-origin:0 0;">Настройка принтера</div><div style="position:absolute;left:222.19px;top:1302.16px;font:400 12.8px/12.8px 'Liberation Sans', sans-serif;color:#000;white-space:nowrap;transform:scaleX(0.9830);transform-origin:0 0;">Предпросмотр</div><div style="position:absolute;left:362.47px;top:1302.16px;font:400 12.8px/12.8px 'Liberation Sans', sans-serif;color:#000;white-space:nowrap;transform:scaleX(1.0078);transform-origin:0 0;">Печать</div><div style="position:absolute;left:468.58px;top:1302.16px;font:400 12.8px/12.8px 'Liberation Sans', sans-serif;color:#000;white-space:nowrap;transform:scaleX(0.9703);transform-origin:0 0;">Сохранит</div><svg style="position:absolute;left:529px;top:1304px" width="9" height="6"><path d="M0 0H8L4 5Z" fill="#000"/></svg><svg style="position:absolute;left:10px;top:1288px" width="40" height="40" viewBox="0 0 40 40"><ellipse cx="20" cy="35" rx="15" ry="1.5" fill="rgba(0,0,0,0.07)"/><path d="M13 11L31 30" stroke="#7b8585" stroke-width="5"/><path d="M13 11L31 30" stroke="#b8c2c2" stroke-width="3"/><circle cx="11" cy="8.6" r="5.6" fill="#b8c2c2" stroke="#7b8585" stroke-width="1"/><path d="M4.5 6.5L8.5 2.8L11.5 5.5L9.5 9.8L6 10.5Z" fill="#f0f0f0"/><circle cx="31.3" cy="29.9" r="4.9" fill="#b8c2c2" stroke="#7b8585" stroke-width="1"/><circle cx="31.3" cy="29.9" r="2" fill="#f4f4f4" stroke="#8a9494" stroke-width="0.6"/><path d="M33.5 4.5L21 17" stroke="#7b8585" stroke-width="3.4" stroke-linecap="round"/><path d="M33.5 4.5L21 17" stroke="#d8e2e2" stroke-width="1.6" stroke-linecap="round"/><path d="M18.3 15.3L23.7 20.7" stroke="#9a4c14" stroke-width="4.5"/><path d="M20 19L7 32" stroke="#8c4210" stroke-width="8.5"/><path d="M20 19L7 32" stroke="#c46a24" stroke-width="6.5"/><path d="M17.5 20L6.5 31" stroke="#e8a060" stroke-width="1.3"/></svg><svg style="position:absolute;left:183px;top:1290px" width="40" height="36" viewBox="0 0 40 36"><defs><linearGradient id="bg1" x1="0" y1="0" x2="0.3" y2="1"><stop offset="0" stop-color="#8a8a8a"/><stop offset="0.5" stop-color="#333"/><stop offset="1" stop-color="#1a1a1a"/></linearGradient><radialGradient id="lg1" cx="35%" cy="30%" r="75%"><stop offset="0" stop-color="#a8b0ff"/><stop offset="0.5" stop-color="#5a50c8"/><stop offset="1" stop-color="#2a1c80"/></radialGradient></defs><path d="M4.5 15.5L20 8.5L24.5 16.5L11 25.5Z" fill="url(#bg1)"/><rect x="20" y="8" width="4" height="3.5" fill="#222"/><path d="M19 19.5L33 10.5L36.5 18.5L26.5 29.5Z" fill="url(#bg1)"/><rect x="32" y="10" width="4" height="4.5" fill="#1a1a1a"/><ellipse cx="7.8" cy="20.2" rx="3.7" ry="4.9" fill="#120e50"/><ellipse cx="8" cy="20.3" rx="2.9" ry="4" fill="url(#lg1)"/><ellipse cx="23.3" cy="24.1" rx="4.3" ry="5.3" fill="#120e50"/><ellipse cx="23.5" cy="24.2" rx="3.4" ry="4.4" fill="url(#lg1)"/></svg><svg style="position:absolute;left:326px;top:1291px" width="34" height="34" viewBox="0 0 34 34"><defs><linearGradient id="pg1" x1="0" y1="0" x2="0" y2="1"><stop offset="0" stop-color="#fff"/><stop offset="1" stop-color="#d0d0d0"/></linearGradient></defs><path d="M7.5 1.5H24L27.5 5V14H7.5Z" fill="url(#pg1)" stroke="#777" stroke-width="1"/><rect x="1.5" y="12.5" width="31" height="16" rx="3" fill="url(#pg1)" stroke="#666" stroke-width="1"/><rect x="5" y="14" width="24" height="6" fill="#6a6a6a"/><rect x="5" y="23" width="24" height="3" fill="#555"/><rect x="7.5" y="26.5" width="19" height="6" rx="1" fill="#fafafa" stroke="#666" stroke-width="1"/></svg><svg style="position:absolute;left:432px;top:1291px" width="32" height="32" viewBox="0 0 32 32"><path d="M1.5 2.5Q1.5 1.5 2.5 1.5H29.5Q30.5 1.5 30.5 2.5V29.5Q30.5 30.5 29.5 30.5H4L1.5 28Z" fill="#7b92b2" stroke="#4f6485" stroke-width="1"/><rect x="6.5" y="1.5" width="19" height="15" fill="#fde8e2"/><path d="M6.5 4.5H25.5M6.5 7.5H25.5M6.5 10.5H25.5M6.5 13.5H25.5" stroke="#f0b0a8" stroke-width="1"/><rect x="3" y="3" width="2" height="2" fill="#223"/><rect x="27" y="3" width="2" height="2" fill="#223"/><rect x="10" y="22" width="14" height="8.5" fill="#e9eef4"/><rect x="12" y="23.5" width="3" height="6" fill="#6a7f9f"/></svg><svg style="position:absolute;left:2523px;top:1294px" width="28" height="26" viewBox="0 0 28 26"><defs><linearGradient id="xg3" x1="0" y1="0" x2="1" y2="1"><stop offset="0" stop-color="#e06060"/><stop offset="0.5" stop-color="#c01018"/><stop offset="1" stop-color="#f04040"/></linearGradient></defs><g transform="translate(14,12.8) rotate(45)" fill="url(#xg3)" stroke="#a00a10" stroke-width="0.5"><rect x="-12.3" y="-3.6" width="24.6" height="7.2" rx="2"/><rect x="-3.6" y="-12.3" width="7.2" height="24.6" rx="2"/></g></svg><div style="position:absolute;left:2px;top:1330px;width:387px;height:23px;background:linear-gradient(180deg,#a5a5a5,#bdbdbd 60%,#bfbfbf)"></div><div style="position:absolute;left:390px;top:1330px;width:2168px;height:23px;background:linear-gradient(180deg,#d6d6d6,#ececec 70%,#f0f0f0)"></div><div style="position:absolute;left:0px;top:1352px;width:2558px;height:1px;background:#8a8f96"></div><div style="position:absolute;left:2474px;top:1331px;width:1px;height:22px;background:#707070"></div><div style="position:absolute;left:2475px;top:1331px;width:1px;height:22px;background:#fff"></div><div style="position:absolute;left:0px;top:1330px;width:2558px;height:1px;background:#6f747c"></div><div style="position:absolute;left:-0.34px;top:1362.99px;font:700 19.5px/19.5px 'Liberation Sans', sans-serif;color:#000;white-space:nowrap;transform:scaleX(1.0718);transform-origin:0 0;">Оператор:</div><div style="position:absolute;left:112.22px;top:1362.99px;font:400 19.5px/19.5px 'Liberation Sans', sans-serif;color:#000;white-space:nowrap;transform:scaleX(1.0021);transform-origin:0 0;">Сковородин В.В.</div><div style="position:absolute;left:287.46px;top:1362.99px;font:700 19.5px/19.5px 'Liberation Sans', sans-serif;color:#000;white-space:nowrap;transform:scaleX(1.0761);transform-origin:0 0;">Склад:</div><div style="position:absolute;left:363.96px;top:1362.99px;font:400 19.5px/19.5px 'Liberation Sans', sans-serif;color:#000;white-space:nowrap;transform:scaleX(1.0791);transform-origin:0 0;">3324 | г. Воронеж...</div><div style="position:absolute;left:571.34px;top:1362.99px;font:700 19.5px/19.5px 'Liberation Sans', sans-serif;color:#000;white-space:nowrap;transform:scaleX(1.0724);transform-origin:0 0;">Версия FX:</div><div style="position:absolute;left:690.77px;top:1362.99px;font:400 19.5px/19.5px 'Liberation Sans', sans-serif;color:#000;white-space:nowrap;transform:scaleX(1.0480);transform-origin:0 0;">(сборка от 09.10.2020 21:36:06,59)</div><div style="position:absolute;left:2267.17px;top:1362.65px;font:700 20.5px/20.5px 'Liberation Sans', sans-serif;color:#ff2a2a;white-space:nowrap;transform:scaleX(1.0739);transform-origin:0 0;">МДЛП</div><svg style="position:absolute;left:2342px;top:1362px" width="20" height="20" viewBox="0 0 20 20"><circle cx="10" cy="10" r="9" fill="#f0c848"/><circle cx="10" cy="10" r="7.6" fill="none" stroke="#fff5d0" stroke-width="1"/><path d="M5 10L9 7V9H14V11H9V13Z" fill="#fff"/></svg><svg style="position:absolute;left:2376px;top:1362px" width="20" height="20" viewBox="0 0 20 20"><circle cx="10" cy="10" r="9" fill="#f0c848"/><circle cx="10" cy="10" r="7.6" fill="none" stroke="#fff5d0" stroke-width="1"/><path d="M15 10L11 7V9H6V11H11V13Z" fill="#fff"/></svg><div style="position:absolute;left:2406.53px;top:1363.05px;font:400 19.2px/19.2px 'Liberation Sans', sans-serif;color:#007800;white-space:nowrap;transform:scaleX(1.0125);transform-origin:0 0;">Сервис доступен</div><div style="position:absolute;left:0px;top:1390px;width:60px;height:1px;background:#1f2a3a"></div><div style="position:absolute;left:490px;top:1390px;width:2068px;height:1px;background:#1f2a3a"></div><div style="position:absolute;left:2420px;top:1331px;width:138px;height:22px;overflow:hidden"><svg style="position:absolute;left:18px;top:-1px" width="26" height="18" viewBox="0 0 26 18"><ellipse cx="11" cy="15.5" rx="6" ry="1.5" fill="rgba(0,0,0,0.12)"/><path d="M1 0H25L22 6.5H16.5L15.5 14.5L8.5 15L9.5 6.5H4Z" fill="#8ab828" stroke="#6a9a18" stroke-width="0.7"/><path d="M3 1H23L21.5 4H5Z" fill="#b5d868"/></svg><svg style="position:absolute;left:62px;top:-12px" width="32" height="32" viewBox="0 0 32 32"><circle cx="16" cy="16" r="14.5" fill="#e8c048"/><circle cx="16" cy="16" r="12" fill="none" stroke="#fff3c8" stroke-width="1.2"/><path d="M8 14L15 9V12H23V16H15V19Z" fill="#f4f0e8"/></svg><svg style="position:absolute;left:104px;top:-8px" width="30" height="26" viewBox="0 0 30 26"><path d="M1 12L8 9L14 17L27 1L29 4L14 24Z" fill="#2f8f22" stroke="#1a5a12" stroke-width="0.8"/></svg></div><svg style="position:absolute;left:0;top:0" width="2558" height="1391">
<line x1="211" y1="250" x2="384" y2="543" stroke="#e23a2f" stroke-width="4" stroke-linecap="round"/>
<path d="M397 564 L371 548 L393 535 Z" fill="#e23a2f"/>
<rect x="406.5" y="584" width="282" height="41.5" rx="6" fill="none" stroke="#e23a2f" stroke-width="5"/>
<line x1="716" y1="617" x2="2350" y2="781" stroke="#e23a2f" stroke-width="4.5" stroke-linecap="round"/>
<path d="M2373 783 L2346 767 L2343 795 Z" fill="#e23a2f"/>
<rect x="2396.5" y="763.5" width="138" height="52" rx="7" fill="none" stroke="#e23a2f" stroke-width="5"/>
</svg>
</body></html>
